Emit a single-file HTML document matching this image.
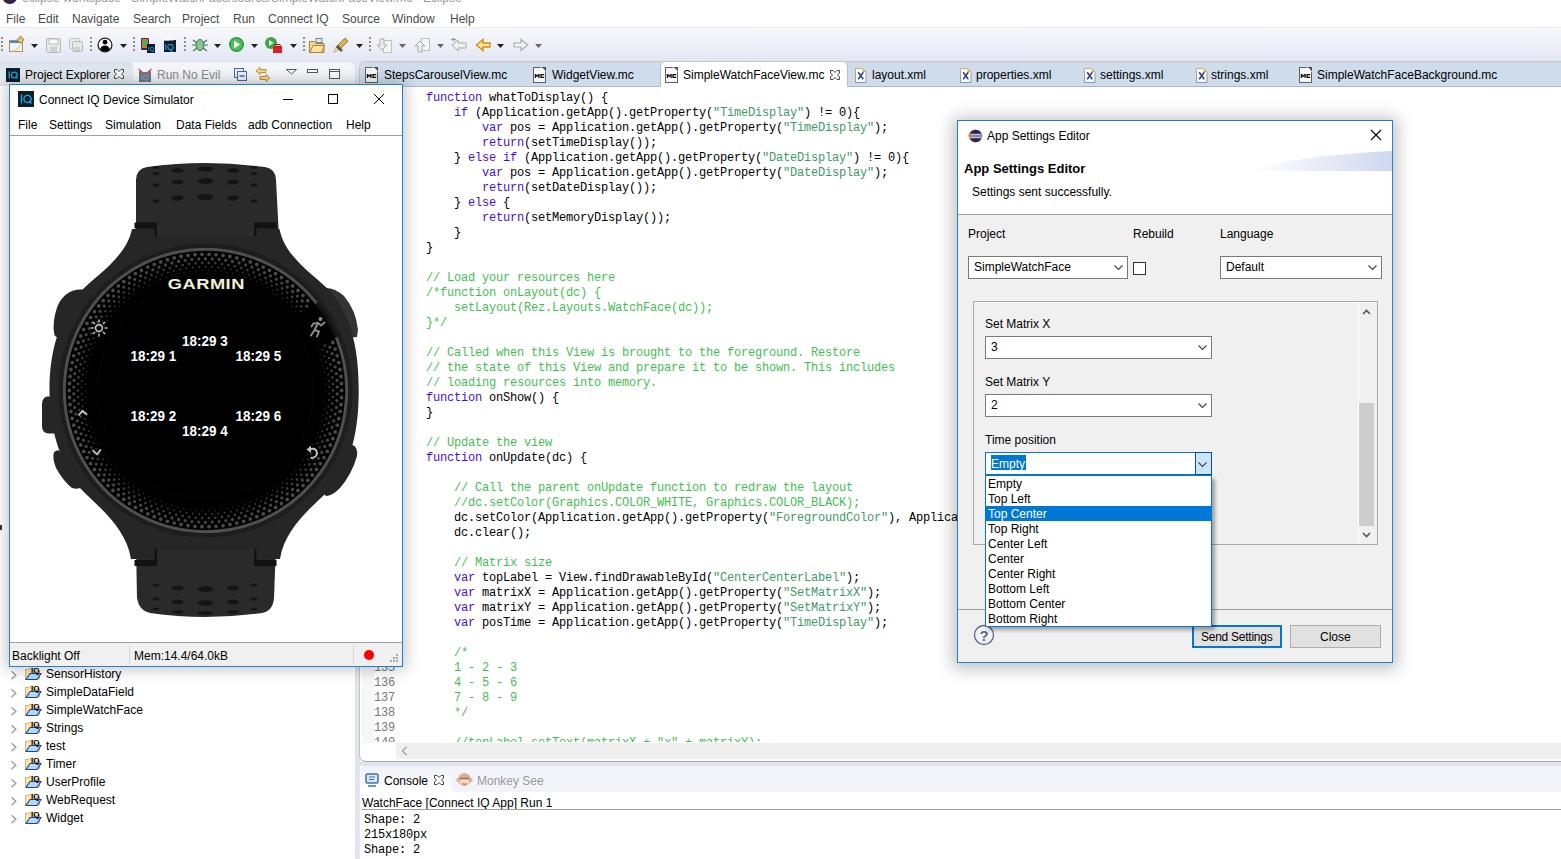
<!DOCTYPE html><html><head><meta charset="utf-8"><style>
*{margin:0;padding:0;box-sizing:border-box}
html,body{width:1561px;height:859px;overflow:hidden;background:#fff}
body{position:relative;font-family:"Liberation Sans",sans-serif;font-size:12px;color:#000}
.a{position:absolute}
.t{position:absolute;white-space:pre;line-height:1;font-family:"Liberation Sans",sans-serif}
.m{position:absolute;white-space:pre;line-height:1;font-family:"Liberation Mono",monospace;font-size:12px;letter-spacing:-0.2px}
svg{position:absolute;overflow:visible}
.k{color:#4a10d8}.c{color:#3fbf4f}.s{color:#3f9a6a}
</style></head><body>
<div class="a" style="left:3px;top:-10px;width:14px;height:14px;border-radius:7px;background:#2c2255;box-shadow:-1px 0 0 #f7941e"></div>
<div class="t" style="left:22px;top:-8px;font-size:12px;color:#999;">eclipse-workspace - SimpleWatchFace/source/SimpleWatchFaceView.mc - Eclipse</div>
<div class="t" style="left:6px;top:13px;font-size:12px;color:#4a4a4a;">File</div>
<div class="t" style="left:38px;top:13px;font-size:12px;color:#4a4a4a;">Edit</div>
<div class="t" style="left:72px;top:13px;font-size:12px;color:#4a4a4a;">Navigate</div>
<div class="t" style="left:133px;top:13px;font-size:12px;color:#4a4a4a;">Search</div>
<div class="t" style="left:182px;top:13px;font-size:12px;color:#4a4a4a;">Project</div>
<div class="t" style="left:233px;top:13px;font-size:12px;color:#4a4a4a;">Run</div>
<div class="t" style="left:268px;top:13px;font-size:12px;color:#4a4a4a;">Connect IQ</div>
<div class="t" style="left:342px;top:13px;font-size:12px;color:#4a4a4a;">Source</div>
<div class="t" style="left:392px;top:13px;font-size:12px;color:#4a4a4a;">Window</div>
<div class="t" style="left:450px;top:13px;font-size:12px;color:#4a4a4a;">Help</div>
<div class="a" style="left:0;top:27px;width:1561px;height:34px;background:linear-gradient(#f8f9fc,#e3e7f4)"></div>
<div class="a" style="left:0;top:27px;width:1561px;height:1px;background:#eceef2"></div>
<div class="a" style="left:0;top:61px;width:1561px;height:25px;background:#e1e5f3"></div>
<svg style="left:0;top:0" width="1561" height="62" viewBox="0 0 1561 62"><rect x="1" y="37" width="2" height="2" fill="#9a9078"/><rect x="1" y="41" width="2" height="2" fill="#9a9078"/><rect x="1" y="45" width="2" height="2" fill="#9a9078"/><rect x="1" y="49" width="2" height="2" fill="#9a9078"/><rect x="9.5" y="40.5" width="13" height="11" fill="#eef6fc" stroke="#a89060"/><rect x="10" y="41" width="12" height="2" fill="#3a88d8"/><path d="M12 51 q7-1 8.5-7" stroke="#f4d890" fill="none" stroke-width="1.5"/><path d="M20.5 36.5 l3.2 3.2 l-3.2 3.2 l-3.2-3.2z" fill="#fff" stroke="#b88a20" stroke-width="1.2"/><path d="M20.5 38v3.4M18.8 39.7h3.4" stroke="#e0b040" stroke-width="0.9"/><path d="M31 44 h7 l-3.5 4z" fill="#222"/><rect x="46.5" y="38.5" width="14" height="14" rx="1.5" fill="#e8e8e8" stroke="#b8b8b8"/><rect x="49" y="39" width="9" height="5" fill="#f8f8f8" stroke="#c0c0c0"/><rect x="50" y="47" width="7" height="5" fill="#d0d0d0"/><rect x="69.5" y="38.5" width="10" height="10" rx="1" fill="#ececec" stroke="#c0c0c0"/><rect x="72.5" y="41.5" width="10" height="10" rx="1" fill="#e8e8e8" stroke="#b8b8b8"/><rect x="74" y="47" width="6" height="4" fill="#d0d0d0"/><rect x="90" y="37" width="2" height="2" fill="#9a9078"/><rect x="90" y="41" width="2" height="2" fill="#9a9078"/><rect x="90" y="45" width="2" height="2" fill="#9a9078"/><rect x="90" y="49" width="2" height="2" fill="#9a9078"/><circle cx="105" cy="45" r="6.9" fill="#fff" stroke="#222" stroke-width="1.3"/><circle cx="105" cy="42.2" r="2.4" fill="#000"/><path d="M100.2 49.6 Q101 45.6 105 45.6 Q109 45.6 109.8 49.6 Q107.8 51.6 105 51.6 Q102.2 51.6 100.2 49.6z" fill="#000"/><path d="M120 44 h7 l-3.5 4z" fill="#222"/><rect x="133" y="37" width="2" height="2" fill="#9a9078"/><rect x="133" y="41" width="2" height="2" fill="#9a9078"/><rect x="133" y="45" width="2" height="2" fill="#9a9078"/><rect x="133" y="49" width="2" height="2" fill="#9a9078"/><rect x="141" y="38" width="8" height="12" rx="1" fill="#334" /><rect x="142" y="39" width="6" height="9" fill="#e86b3a"/><rect x="143" y="40" width="4" height="6" fill="#4caf50"/><rect x="147" y="44" width="8" height="9" fill="#0b1e2d"/><text x="148" y="51" font-size="6" fill="#29b6f6" font-family="Liberation Sans">IQ</text><rect x="164" y="40" width="12" height="12" fill="#0b1e2d"/><text x="164.5" y="50" font-size="9" fill="#29b6f6" font-family="Liberation Sans">IQ</text><text x="163" y="41" font-size="5" fill="#fff" font-weight="bold" font-family="Liberation Sans">SDK</text><rect x="184" y="37" width="2" height="2" fill="#9a9078"/><rect x="184" y="41" width="2" height="2" fill="#9a9078"/><rect x="184" y="45" width="2" height="2" fill="#9a9078"/><rect x="184" y="49" width="2" height="2" fill="#9a9078"/><ellipse cx="200" cy="45" rx="4" ry="5.5" fill="#8fbf8f" stroke="#3a7a5a"/><path d="M193 40l4 3M207 40l-4 3M192 45h4M208 45h-4M193 51l4-3M207 51l-4-3" stroke="#3a7a5a" stroke-width="1.2"/><path d="M214 44 h7 l-3.5 4z" fill="#222"/><circle cx="236.5" cy="44.5" r="7.5" fill="#2e9a3e"/><circle cx="236.5" cy="44.5" r="6" fill="#4cbf5a"/><path d="M234 40.5 v8 l6-4z" fill="#fff"/><path d="M251 44 h7 l-3.5 4z" fill="#222"/><circle cx="271" cy="43" r="6" fill="#3aa84a"/><path d="M269 40 v6 l4.5-3z" fill="#fff"/><rect x="273" y="46" width="9" height="7" fill="#e02020"/><rect x="275" y="44.5" width="5" height="2" fill="none" stroke="#c01010"/><path d="M290 44 h7 l-3.5 4z" fill="#222"/><rect x="303" y="37" width="2" height="2" fill="#9a9078"/><rect x="303" y="41" width="2" height="2" fill="#9a9078"/><rect x="303" y="45" width="2" height="2" fill="#9a9078"/><rect x="303" y="49" width="2" height="2" fill="#9a9078"/><path d="M309.5 41.5 h5 l1.5 2 h8 v9 h-14.5z" fill="#f7d58a" stroke="#b08030"/><rect x="316" y="38.5" width="6" height="4" fill="#dde8f4" stroke="#6a8ab0"/><path d="M310 52.5 l3-7 h11.5 l-3 7z" fill="#fbe3a8" stroke="#b08030"/><path d="M334 52 l3-6 l8-8 l3 3 l-8 8z" fill="#d8b050" stroke="#9a7a40"/><path d="M337 46 l5 5" stroke="#555" stroke-width="2.5"/><path d="M334 52 l2-4 l2 2z" fill="#fff4c0"/><path d="M356 44 h7 l-3.5 4z" fill="#222"/><rect x="369" y="37" width="2" height="2" fill="#9a9078"/><rect x="369" y="41" width="2" height="2" fill="#9a9078"/><rect x="369" y="45" width="2" height="2" fill="#9a9078"/><rect x="369" y="49" width="2" height="2" fill="#9a9078"/><rect x="383.5" y="40.5" width="8" height="12" fill="#f4f4f4" stroke="#c0c0c0"/><path d="M380 39 v6 h-3 l5 5 l5-5 h-3 v-6z" fill="#eee" stroke="#aaa"/><path d="M399 44 h7 l-3.5 4z" fill="#666"/><rect x="421.5" y="38.5" width="8" height="12" fill="#f4f4f4" stroke="#c0c0c0"/><path d="M418 52 v-6 h-3 l5-5 l5 5 h-3 v6z" fill="#eee" stroke="#aaa"/><path d="M437 44 h7 l-3.5 4z" fill="#666"/><path d="M452 45 l6-5 v3 h8 v5 h-8 v3z" fill="#f0f0f0" stroke="#aaa"/><path d="M452 38 l3 3 M455 38 l-3 3 M451 39.5h5" stroke="#888" stroke-width="0.8"/><path d="M476.5 45 l6.5-5.5 v3.5 h7 v4 h-7 v3.5z" fill="#fce7a0" stroke="#d09010" stroke-width="1.4"/><path d="M497 44 h7 l-3.5 4z" fill="#222"/><path d="M527.5 45 l-6.5-5.5 v3.5 h-7 v4 h7 v3.5z" fill="#f4f4f4" stroke="#aaa" stroke-width="1.2"/><path d="M535 44 h7 l-3.5 4z" fill="#666"/></svg>
<div class="a" style="left:0;top:61px;width:355px;height:798px;background:#fff;border-top-right-radius:7px;border-top:1px solid #dfe3ea"></div>
<div class="a" style="left:0;top:62px;width:355px;height:24px;background:linear-gradient(#f3f5fa,#f6f7fa 70%,#e6e8ee);border-top-right-radius:7px"></div>
<div class="a" style="left:0;top:61px;width:133px;height:25px;background:linear-gradient(#d9e2ec,#e9edf2 80%,#e2e4ea);border-top-right-radius:6px;border-top-left-radius:3px"></div>
<div class="a" style="left:355px;top:86px;width:5px;height:773px;background:#dfe3f2"></div>
<div class="a" style="left:359px;top:61px;width:1202px;height:701px;background:#fff;border-left:1px solid #c9c4bc;border-top:1px solid #c9c4bc;border-bottom:1px solid #a8a8a8;border-top-left-radius:7px;border-bottom-left-radius:7px"></div>
<div class="a" style="left:360px;top:62px;width:1201px;height:24px;background:#cfdcec;border-top-left-radius:6px"></div>
<div class="a" style="left:360px;top:86px;width:1201px;height:1px;background:#b2b9c6"></div>
<div class="a" style="left:660px;top:62px;width:188px;height:25px;background:#fff;border-left:1px solid #b8c0cc;border-right:1px solid #b8c0cc;border-top-left-radius:5px;border-top-right-radius:5px"></div>
<svg style="left:365px;top:67px" width="13" height="16" viewBox="0 0 13 16"><rect x="0.5" y="0.5" width="12" height="15" fill="#f7f7f7" stroke="#606060"/><path d="M8.8 0 H13 V4.2z" fill="#505050"/><path d="M7.8 0.2 L12.8 5.2" stroke="#fff" stroke-width="1"/><path d="M1.8 11 V7 H3.2 L4.3 8.4 L5.4 7 H6.7 V11 H5.5 V8.9 L4.3 10.2 L3.1 8.9 V11z" fill="#111"/><path d="M7.4 7 H11.2 V8.3 H8.8 V9.7 H11.2 V11 H7.4z" fill="#111"/></svg>
<div class="t" style="left:384px;top:69px;font-size:12px;color:#000;">StepsCarouselView.mc</div>
<svg style="left:533px;top:67px" width="13" height="16" viewBox="0 0 13 16"><rect x="0.5" y="0.5" width="12" height="15" fill="#f7f7f7" stroke="#606060"/><path d="M8.8 0 H13 V4.2z" fill="#505050"/><path d="M7.8 0.2 L12.8 5.2" stroke="#fff" stroke-width="1"/><path d="M1.8 11 V7 H3.2 L4.3 8.4 L5.4 7 H6.7 V11 H5.5 V8.9 L4.3 10.2 L3.1 8.9 V11z" fill="#111"/><path d="M7.4 7 H11.2 V8.3 H8.8 V9.7 H11.2 V11 H7.4z" fill="#111"/></svg>
<div class="t" style="left:552px;top:69px;font-size:12px;color:#000;">WidgetView.mc</div>
<svg style="left:665px;top:67px" width="13" height="16" viewBox="0 0 13 16"><rect x="0.5" y="0.5" width="12" height="15" fill="#f7f7f7" stroke="#606060"/><path d="M8.8 0 H13 V4.2z" fill="#505050"/><path d="M7.8 0.2 L12.8 5.2" stroke="#fff" stroke-width="1"/><path d="M1.8 11 V7 H3.2 L4.3 8.4 L5.4 7 H6.7 V11 H5.5 V8.9 L4.3 10.2 L3.1 8.9 V11z" fill="#111"/><path d="M7.4 7 H11.2 V8.3 H8.8 V9.7 H11.2 V11 H7.4z" fill="#111"/></svg>
<div class="t" style="left:683px;top:69px;font-size:12px;color:#000;">SimpleWatchFaceView.mc</div>
<svg style="left:830px;top:70px" width="11" height="11" viewBox="0 0 11 11"><path d="M0.5 0.5 H3 L5 2.5 L7 0.5 H9.5 V3 L7.5 5 L9.5 7 V9.5 H7 L5 7.5 L3 9.5 H0.5 V7 L2.5 5 L0.5 3 Z" fill="#fff" stroke="#444" stroke-width="1"/></svg>
<svg style="left:855px;top:68px" width="12" height="15" viewBox="0 0 12 15"><defs><linearGradient id="xg" x1="0" y1="0" x2="0" y2="1"><stop offset="0" stop-color="#c8b078"/><stop offset="1" stop-color="#8a94aa"/></linearGradient></defs><path d="M0.5 0.5 h7 l3.5 3.5 v10.5 h-10.5z" fill="#f8f9fc" stroke="url(#xg)"/><path d="M7.5 0.5 l3.5 3.5 h-3.5z" fill="#e0b050"/><path d="M3.2 4.3 L8.3 11.2 M8.3 4.3 L3.2 11.2" stroke="#2a4674" stroke-width="1.5"/></svg>
<div class="t" style="left:872px;top:69px;font-size:12px;color:#000;">layout.xml</div>
<svg style="left:960px;top:68px" width="12" height="15" viewBox="0 0 12 15"><defs><linearGradient id="xg" x1="0" y1="0" x2="0" y2="1"><stop offset="0" stop-color="#c8b078"/><stop offset="1" stop-color="#8a94aa"/></linearGradient></defs><path d="M0.5 0.5 h7 l3.5 3.5 v10.5 h-10.5z" fill="#f8f9fc" stroke="url(#xg)"/><path d="M7.5 0.5 l3.5 3.5 h-3.5z" fill="#e0b050"/><path d="M3.2 4.3 L8.3 11.2 M8.3 4.3 L3.2 11.2" stroke="#2a4674" stroke-width="1.5"/></svg>
<div class="t" style="left:976px;top:69px;font-size:12px;color:#000;">properties.xml</div>
<svg style="left:1084px;top:68px" width="12" height="15" viewBox="0 0 12 15"><defs><linearGradient id="xg" x1="0" y1="0" x2="0" y2="1"><stop offset="0" stop-color="#c8b078"/><stop offset="1" stop-color="#8a94aa"/></linearGradient></defs><path d="M0.5 0.5 h7 l3.5 3.5 v10.5 h-10.5z" fill="#f8f9fc" stroke="url(#xg)"/><path d="M7.5 0.5 l3.5 3.5 h-3.5z" fill="#e0b050"/><path d="M3.2 4.3 L8.3 11.2 M8.3 4.3 L3.2 11.2" stroke="#2a4674" stroke-width="1.5"/></svg>
<div class="t" style="left:1100px;top:69px;font-size:12px;color:#000;">settings.xml</div>
<svg style="left:1196px;top:68px" width="12" height="15" viewBox="0 0 12 15"><defs><linearGradient id="xg" x1="0" y1="0" x2="0" y2="1"><stop offset="0" stop-color="#c8b078"/><stop offset="1" stop-color="#8a94aa"/></linearGradient></defs><path d="M0.5 0.5 h7 l3.5 3.5 v10.5 h-10.5z" fill="#f8f9fc" stroke="url(#xg)"/><path d="M7.5 0.5 l3.5 3.5 h-3.5z" fill="#e0b050"/><path d="M3.2 4.3 L8.3 11.2 M8.3 4.3 L3.2 11.2" stroke="#2a4674" stroke-width="1.5"/></svg>
<div class="t" style="left:1211px;top:69px;font-size:12px;color:#000;">strings.xml</div>
<svg style="left:1299px;top:67px" width="13" height="16" viewBox="0 0 13 16"><rect x="0.5" y="0.5" width="12" height="15" fill="#f7f7f7" stroke="#606060"/><path d="M8.8 0 H13 V4.2z" fill="#505050"/><path d="M7.8 0.2 L12.8 5.2" stroke="#fff" stroke-width="1"/><path d="M1.8 11 V7 H3.2 L4.3 8.4 L5.4 7 H6.7 V11 H5.5 V8.9 L4.3 10.2 L3.1 8.9 V11z" fill="#111"/><path d="M7.4 7 H11.2 V8.3 H8.8 V9.7 H11.2 V11 H7.4z" fill="#111"/></svg>
<div class="t" style="left:1317px;top:69px;font-size:12px;color:#000;">SimpleWatchFaceBackground.mc</div>
<div class="a" style="left:362px;top:87px;width:12px;height:656px;background:#f7f7f7"></div>
<div class="a" style="left:360px;top:87px;width:1201px;height:655px;overflow:hidden">
<div class="m" style="left:38px;top:5px">    <span class="k">function</span> whatToDisplay() {</div>
<div class="m" style="left:14px;top:5px;color:#787878">97</div>
<div class="m" style="left:38px;top:20px">        <span class="k">if</span> (Application.getApp().getProperty(<span class="s">&quot;TimeDisplay&quot;</span>) != 0){</div>
<div class="m" style="left:14px;top:20px;color:#787878">98</div>
<div class="m" style="left:38px;top:35px">            <span class="k">var</span> pos = Application.getApp().getProperty(<span class="s">&quot;TimeDisplay&quot;</span>);</div>
<div class="m" style="left:14px;top:35px;color:#787878">99</div>
<div class="m" style="left:38px;top:50px">            <span class="k">return</span>(setTimeDisplay());</div>
<div class="m" style="left:14px;top:50px;color:#787878">100</div>
<div class="m" style="left:38px;top:65px">        } <span class="k">else if</span> (Application.getApp().getProperty(<span class="s">&quot;DateDisplay&quot;</span>) != 0){</div>
<div class="m" style="left:14px;top:65px;color:#787878">101</div>
<div class="m" style="left:38px;top:80px">            <span class="k">var</span> pos = Application.getApp().getProperty(<span class="s">&quot;DateDisplay&quot;</span>);</div>
<div class="m" style="left:14px;top:80px;color:#787878">102</div>
<div class="m" style="left:38px;top:95px">            <span class="k">return</span>(setDateDisplay());</div>
<div class="m" style="left:14px;top:95px;color:#787878">103</div>
<div class="m" style="left:38px;top:110px">        } <span class="k">else</span> {</div>
<div class="m" style="left:14px;top:110px;color:#787878">104</div>
<div class="m" style="left:38px;top:125px">            <span class="k">return</span>(setMemoryDisplay());</div>
<div class="m" style="left:14px;top:125px;color:#787878">105</div>
<div class="m" style="left:38px;top:140px">        }</div>
<div class="m" style="left:14px;top:140px;color:#787878">106</div>
<div class="m" style="left:38px;top:155px">    }</div>
<div class="m" style="left:14px;top:155px;color:#787878">107</div>
<div class="m" style="left:38px;top:170px"></div>
<div class="m" style="left:14px;top:170px;color:#787878">108</div>
<div class="m" style="left:38px;top:185px">    <span class="c">// Load your resources here</span></div>
<div class="m" style="left:14px;top:185px;color:#787878">109</div>
<div class="m" style="left:38px;top:200px">    <span class="c">/*function onLayout(dc) {</span></div>
<div class="m" style="left:14px;top:200px;color:#787878">110</div>
<div class="m" style="left:38px;top:215px">        <span class="c">setLayout(Rez.Layouts.WatchFace(dc));</span></div>
<div class="m" style="left:14px;top:215px;color:#787878">111</div>
<div class="m" style="left:38px;top:230px">    <span class="c">}*/</span></div>
<div class="m" style="left:14px;top:230px;color:#787878">112</div>
<div class="m" style="left:38px;top:245px"></div>
<div class="m" style="left:14px;top:245px;color:#787878">113</div>
<div class="m" style="left:38px;top:260px">    <span class="c">// Called when this View is brought to the foreground. Restore</span></div>
<div class="m" style="left:14px;top:260px;color:#787878">114</div>
<div class="m" style="left:38px;top:275px">    <span class="c">// the state of this View and prepare it to be shown. This includes</span></div>
<div class="m" style="left:14px;top:275px;color:#787878">115</div>
<div class="m" style="left:38px;top:290px">    <span class="c">// loading resources into memory.</span></div>
<div class="m" style="left:14px;top:290px;color:#787878">116</div>
<div class="m" style="left:38px;top:305px">    <span class="k">function</span> onShow() {</div>
<div class="m" style="left:14px;top:305px;color:#787878">117</div>
<div class="m" style="left:38px;top:320px">    }</div>
<div class="m" style="left:14px;top:320px;color:#787878">118</div>
<div class="m" style="left:38px;top:335px"></div>
<div class="m" style="left:14px;top:335px;color:#787878">119</div>
<div class="m" style="left:38px;top:350px">    <span class="c">// Update the view</span></div>
<div class="m" style="left:14px;top:350px;color:#787878">120</div>
<div class="m" style="left:38px;top:365px">    <span class="k">function</span> onUpdate(dc) {</div>
<div class="m" style="left:14px;top:365px;color:#787878">121</div>
<div class="m" style="left:38px;top:380px"></div>
<div class="m" style="left:14px;top:380px;color:#787878">122</div>
<div class="m" style="left:38px;top:395px">        <span class="c">// Call the parent onUpdate function to redraw the layout</span></div>
<div class="m" style="left:14px;top:395px;color:#787878">123</div>
<div class="m" style="left:38px;top:410px">        <span class="c">//dc.setColor(Graphics.COLOR_WHITE, Graphics.COLOR_BLACK);</span></div>
<div class="m" style="left:14px;top:410px;color:#787878">124</div>
<div class="m" style="left:38px;top:425px">        dc.setColor(Application.getApp().getProperty(<span class="s">&quot;ForegroundColor&quot;</span>), Application.getApp().getProperty(<span class="s">&quot;BackgroundColor&quot;</span>));</div>
<div class="m" style="left:14px;top:425px;color:#787878">125</div>
<div class="m" style="left:38px;top:440px">        dc.clear();</div>
<div class="m" style="left:14px;top:440px;color:#787878">126</div>
<div class="m" style="left:38px;top:455px"></div>
<div class="m" style="left:14px;top:455px;color:#787878">127</div>
<div class="m" style="left:38px;top:470px">        <span class="c">// Matrix size</span></div>
<div class="m" style="left:14px;top:470px;color:#787878">128</div>
<div class="m" style="left:38px;top:485px">        <span class="k">var</span> topLabel = View.findDrawableById(<span class="s">&quot;CenterCenterLabel&quot;</span>);</div>
<div class="m" style="left:14px;top:485px;color:#787878">129</div>
<div class="m" style="left:38px;top:500px">        <span class="k">var</span> matrixX = Application.getApp().getProperty(<span class="s">&quot;SetMatrixX&quot;</span>);</div>
<div class="m" style="left:14px;top:500px;color:#787878">130</div>
<div class="m" style="left:38px;top:515px">        <span class="k">var</span> matrixY = Application.getApp().getProperty(<span class="s">&quot;SetMatrixY&quot;</span>);</div>
<div class="m" style="left:14px;top:515px;color:#787878">131</div>
<div class="m" style="left:38px;top:530px">        <span class="k">var</span> posTime = Application.getApp().getProperty(<span class="s">&quot;TimeDisplay&quot;</span>);</div>
<div class="m" style="left:14px;top:530px;color:#787878">132</div>
<div class="m" style="left:38px;top:545px"></div>
<div class="m" style="left:14px;top:545px;color:#787878">133</div>
<div class="m" style="left:38px;top:560px">        <span class="c">/*</span></div>
<div class="m" style="left:14px;top:560px;color:#787878">134</div>
<div class="m" style="left:38px;top:575px">        <span class="c">1 - 2 - 3</span></div>
<div class="m" style="left:14px;top:575px;color:#787878">135</div>
<div class="m" style="left:38px;top:590px">        <span class="c">4 - 5 - 6</span></div>
<div class="m" style="left:14px;top:590px;color:#787878">136</div>
<div class="m" style="left:38px;top:605px">        <span class="c">7 - 8 - 9</span></div>
<div class="m" style="left:14px;top:605px;color:#787878">137</div>
<div class="m" style="left:38px;top:620px">        <span class="c">*/</span></div>
<div class="m" style="left:14px;top:620px;color:#787878">138</div>
<div class="m" style="left:38px;top:635px"></div>
<div class="m" style="left:14px;top:635px;color:#787878">139</div>
<div class="m" style="left:38px;top:650px">        <span class="c">//topLabel.setText(matrixX + &quot;x&quot; + matrixY);</span></div>
<div class="m" style="left:14px;top:650px;color:#787878">140</div>
</div>
<div class="a" style="left:396px;top:743px;width:1165px;height:16px;background:#efefef"></div>
<svg style="left:400px;top:745px" width="10" height="12" viewBox="0 0 10 12"><path d="M6.5 2 l-4 4 l4 4" stroke="#a0a0a0" stroke-width="1.3" fill="none"/></svg>
<div class="a" style="left:360px;top:762px;width:1201px;height:4px;background:#dfe3f2"></div>
<div class="a" style="left:359px;top:766px;width:1202px;height:93px;background:#fff;border-left:1px solid #e8e8ee;border-top-left-radius:7px"></div>
<div class="a" style="left:360px;top:766px;width:1201px;height:26px;background:#f3f4fa;border-top-left-radius:6px"></div>
<div class="a" style="left:360px;top:766px;width:92px;height:26px;background:linear-gradient(#eef1f6,#fff);border-top-right-radius:7px;border-top-left-radius:6px"></div>
<svg style="left:365px;top:773px" width="14" height="14" viewBox="0 0 14 14"><rect x="1" y="1" width="12" height="9" rx="1.5" fill="#dfe8f6" stroke="#3f6fb0" stroke-width="1.5"/><path d="M4 4h6M4 6.5h5" stroke="#3f6fb0"/><path d="M3 13h8" stroke="#3f6fb0" stroke-width="1.5"/></svg>
<div class="t" style="left:384px;top:775px;font-size:12px;color:#000;">Console</div>
<svg style="left:434px;top:775px" width="11" height="11" viewBox="0 0 11 11"><path d="M0.5 0.5 H3 L5 2.5 L7 0.5 H9.5 V3 L7.5 5 L9.5 7 V9.5 H7 L5 7.5 L3 9.5 H0.5 V7 L2.5 5 L0.5 3 Z" fill="#fff" stroke="#444" stroke-width="1"/></svg>
<svg style="left:456px;top:771px" width="17" height="17" viewBox="0 0 17 17"><circle cx="2.5" cy="9" r="2.3" fill="#e0b8a0"/><circle cx="14.5" cy="9" r="2.3" fill="#e0b8a0"/><circle cx="8.5" cy="8.5" r="6.5" fill="#d9ae92"/><ellipse cx="8.5" cy="10.5" rx="4.5" ry="4" fill="#f3d9c6"/><path d="M4 7.5h9" stroke="#a07058" stroke-width="1.6"/><path d="M6.5 12.5q2 1.5 4 0" stroke="#c06060" stroke-width="1.2" fill="none"/></svg>
<div class="t" style="left:477px;top:775px;font-size:12px;color:#999;">Monkey See</div>
<div class="t" style="left:362px;top:797px;font-size:12px;color:#000;">WatchFace [Connect IQ App] Run 1</div>
<div class="a" style="left:362px;top:809px;width:1199px;height:1px;background:#a0a0a0"></div>
<div class="m" style="left:364px;top:814px">Shape: 2</div>
<div class="m" style="left:364px;top:829px">215x180px</div>
<div class="m" style="left:364px;top:844px">Shape: 2</div>
<svg style="left:6px;top:68px" width="14" height="14" viewBox="0 0 14 14"><rect width="14" height="14" fill="#0d1e2c"/><path d="M3.2 3.5v7" stroke="#22a8d8" stroke-width="1.3"/><circle cx="8.3" cy="7" r="2.9" stroke="#22a8d8" stroke-width="1.3" fill="none"/><path d="M9.5 8.5l2 2" stroke="#22a8d8" stroke-width="1.3"/></svg>
<div class="t" style="left:25px;top:69px;font-size:12px;color:#000;">Project Explorer</div>
<svg style="left:114px;top:69px" width="11" height="11" viewBox="0 0 11 11"><path d="M0.5 0.5 H3 L5 2.5 L7 0.5 H9.5 V3 L7.5 5 L9.5 7 V9.5 H7 L5 7.5 L3 9.5 H0.5 V7 L2.5 5 L0.5 3 Z" fill="#fff" stroke="#444" stroke-width="1"/></svg>
<svg style="left:137px;top:67px" width="16" height="16" viewBox="0 0 16 16"><rect x="2" y="5" width="12" height="10" fill="#6a7a88"/><path d="M1 1 l2 5 l3-1z M15 1 l-2 5 l-3-1z" fill="#d04848"/><text x="4" y="13" font-size="7" fill="#aac" font-family="Liberation Sans">IQ</text></svg>
<div class="t" style="left:157px;top:69px;font-size:12px;color:#8a8a8a;">Run No Evil</div>
<svg style="left:233px;top:67px" width="120" height="16" viewBox="233 67 120 16"><rect x="234.5" y="68.5" width="9" height="9" fill="#eef2f8" stroke="#4a6a9a"/><rect x="237.5" y="71.5" width="9" height="9" fill="#eef2f8" stroke="#4a6a9a"/><path d="M239.5 76h5" stroke="#2050a0" stroke-width="1.3"/><path d="M256 71 l4-3.5 v2 h6 v3 h-6 v2z M270 78 l-4 3.5 v-2 h-6 v-3 h6 v-2z" fill="#f5d890" stroke="#c08a20" stroke-width="0.9"/><path d="M286.5 69.5 h10 l-5 4.5z" fill="#fff" stroke="#555"/><rect x="307.5" y="69.5" width="10" height="3" fill="#fff" stroke="#555"/><rect x="329.5" y="69.5" width="10" height="9" fill="#fff" stroke="#555"/><path d="M330 71.5h9" stroke="#555"/></svg>
<svg style="left:8px;top:665px" width="36" height="18" viewBox="0 0 36 18"><path d="M3.5 6.3 L7.8 10.3 L3.5 14.3" stroke="#a0a0a0" stroke-width="1.5" fill="none"/><path d="M17.5 14 V4.5 h3 l1-1.2 h5 v2.7 h5 v8z" fill="#fbe6a6" stroke="#c8a060" stroke-width="0.8"/><path d="M18 14.5 l4-6 h11 l-4 6z" fill="#a8dcf6" stroke="#2a3aa8" stroke-width="1.1"/><text x="23" y="8" font-size="8" font-weight="bold" fill="#000" font-family="Liberation Sans">IQ</text></svg>
<div class="t" style="left:46px;top:668px;font-size:12px;color:#000;">SensorHistory</div>
<svg style="left:8px;top:683px" width="36" height="18" viewBox="0 0 36 18"><path d="M3.5 6.3 L7.8 10.3 L3.5 14.3" stroke="#a0a0a0" stroke-width="1.5" fill="none"/><path d="M17.5 14 V4.5 h3 l1-1.2 h5 v2.7 h5 v8z" fill="#fbe6a6" stroke="#c8a060" stroke-width="0.8"/><path d="M18 14.5 l4-6 h11 l-4 6z" fill="#a8dcf6" stroke="#2a3aa8" stroke-width="1.1"/><text x="23" y="8" font-size="8" font-weight="bold" fill="#000" font-family="Liberation Sans">IQ</text></svg>
<div class="t" style="left:46px;top:686px;font-size:12px;color:#000;">SimpleDataField</div>
<svg style="left:8px;top:701px" width="36" height="18" viewBox="0 0 36 18"><path d="M3.5 6.3 L7.8 10.3 L3.5 14.3" stroke="#a0a0a0" stroke-width="1.5" fill="none"/><path d="M17.5 14 V4.5 h3 l1-1.2 h5 v2.7 h5 v8z" fill="#fbe6a6" stroke="#c8a060" stroke-width="0.8"/><path d="M18 14.5 l4-6 h11 l-4 6z" fill="#a8dcf6" stroke="#2a3aa8" stroke-width="1.1"/><text x="23" y="8" font-size="8" font-weight="bold" fill="#000" font-family="Liberation Sans">IQ</text></svg>
<div class="t" style="left:46px;top:704px;font-size:12px;color:#000;">SimpleWatchFace</div>
<svg style="left:8px;top:719px" width="36" height="18" viewBox="0 0 36 18"><path d="M3.5 6.3 L7.8 10.3 L3.5 14.3" stroke="#a0a0a0" stroke-width="1.5" fill="none"/><path d="M17.5 14 V4.5 h3 l1-1.2 h5 v2.7 h5 v8z" fill="#fbe6a6" stroke="#c8a060" stroke-width="0.8"/><path d="M18 14.5 l4-6 h11 l-4 6z" fill="#a8dcf6" stroke="#2a3aa8" stroke-width="1.1"/><text x="23" y="8" font-size="8" font-weight="bold" fill="#000" font-family="Liberation Sans">IQ</text></svg>
<div class="t" style="left:46px;top:722px;font-size:12px;color:#000;">Strings</div>
<svg style="left:8px;top:737px" width="36" height="18" viewBox="0 0 36 18"><path d="M3.5 6.3 L7.8 10.3 L3.5 14.3" stroke="#a0a0a0" stroke-width="1.5" fill="none"/><path d="M17.5 14 V4.5 h3 l1-1.2 h5 v2.7 h5 v8z" fill="#fbe6a6" stroke="#c8a060" stroke-width="0.8"/><path d="M18 14.5 l4-6 h11 l-4 6z" fill="#a8dcf6" stroke="#2a3aa8" stroke-width="1.1"/><text x="23" y="8" font-size="8" font-weight="bold" fill="#000" font-family="Liberation Sans">IQ</text></svg>
<div class="t" style="left:46px;top:740px;font-size:12px;color:#000;">test</div>
<svg style="left:8px;top:755px" width="36" height="18" viewBox="0 0 36 18"><path d="M3.5 6.3 L7.8 10.3 L3.5 14.3" stroke="#a0a0a0" stroke-width="1.5" fill="none"/><path d="M17.5 14 V4.5 h3 l1-1.2 h5 v2.7 h5 v8z" fill="#fbe6a6" stroke="#c8a060" stroke-width="0.8"/><path d="M18 14.5 l4-6 h11 l-4 6z" fill="#a8dcf6" stroke="#2a3aa8" stroke-width="1.1"/><text x="23" y="8" font-size="8" font-weight="bold" fill="#000" font-family="Liberation Sans">IQ</text></svg>
<div class="t" style="left:46px;top:758px;font-size:12px;color:#000;">Timer</div>
<svg style="left:8px;top:773px" width="36" height="18" viewBox="0 0 36 18"><path d="M3.5 6.3 L7.8 10.3 L3.5 14.3" stroke="#a0a0a0" stroke-width="1.5" fill="none"/><path d="M17.5 14 V4.5 h3 l1-1.2 h5 v2.7 h5 v8z" fill="#fbe6a6" stroke="#c8a060" stroke-width="0.8"/><path d="M18 14.5 l4-6 h11 l-4 6z" fill="#a8dcf6" stroke="#2a3aa8" stroke-width="1.1"/><text x="23" y="8" font-size="8" font-weight="bold" fill="#000" font-family="Liberation Sans">IQ</text></svg>
<div class="t" style="left:46px;top:776px;font-size:12px;color:#000;">UserProfile</div>
<svg style="left:8px;top:791px" width="36" height="18" viewBox="0 0 36 18"><path d="M3.5 6.3 L7.8 10.3 L3.5 14.3" stroke="#a0a0a0" stroke-width="1.5" fill="none"/><path d="M17.5 14 V4.5 h3 l1-1.2 h5 v2.7 h5 v8z" fill="#fbe6a6" stroke="#c8a060" stroke-width="0.8"/><path d="M18 14.5 l4-6 h11 l-4 6z" fill="#a8dcf6" stroke="#2a3aa8" stroke-width="1.1"/><text x="23" y="8" font-size="8" font-weight="bold" fill="#000" font-family="Liberation Sans">IQ</text></svg>
<div class="t" style="left:46px;top:794px;font-size:12px;color:#000;">WebRequest</div>
<svg style="left:8px;top:809px" width="36" height="18" viewBox="0 0 36 18"><path d="M3.5 6.3 L7.8 10.3 L3.5 14.3" stroke="#a0a0a0" stroke-width="1.5" fill="none"/><path d="M17.5 14 V4.5 h3 l1-1.2 h5 v2.7 h5 v8z" fill="#fbe6a6" stroke="#c8a060" stroke-width="0.8"/><path d="M18 14.5 l4-6 h11 l-4 6z" fill="#a8dcf6" stroke="#2a3aa8" stroke-width="1.1"/><text x="23" y="8" font-size="8" font-weight="bold" fill="#000" font-family="Liberation Sans">IQ</text></svg>
<div class="t" style="left:46px;top:812px;font-size:12px;color:#000;">Widget</div>
<div class="a" style="left:0;top:525px;width:2px;height:5px;border:1px solid #333"></div>
<div class="a" style="left:9px;top:84px;width:394px;height:583px;box-shadow:0 0 14px 3px rgba(0,0,0,0.22)"></div><div class="a" style="left:9px;top:84px;width:394px;height:583px;background:#fff;border:1px solid #1883d7"></div><svg style="left:18px;top:91px" width="16" height="16" viewBox="0 0 16 16"><rect width="16" height="16" fill="#0d1e2c"/><path d="M3.5 3.5v9" stroke="#22a8d8" stroke-width="1.4"/><circle cx="9.5" cy="8" r="3.6" stroke="#22a8d8" stroke-width="1.4" fill="none"/><path d="M11 10l2.5 2.5" stroke="#22a8d8" stroke-width="1.4"/></svg><div class="t" style="left:39px;top:94px;font-size:12px;color:#000;">Connect IQ Device Simulator</div><svg style="left:270px;top:88px" width="130" height="24" viewBox="270 88 130 24"><path d="M283 99.5h10" stroke="#000"/><rect x="328.5" y="94.5" width="9" height="9" fill="none" stroke="#000"/><path d="M374 94l10 10M384 94l-10 10" stroke="#000" stroke-width="1"/></svg><div class="t" style="left:18px;top:119px;font-size:12px;color:#000;">File</div><div class="t" style="left:49px;top:119px;font-size:12px;color:#000;">Settings</div><div class="t" style="left:105px;top:119px;font-size:12px;color:#000;">Simulation</div><div class="t" style="left:176px;top:119px;font-size:12px;color:#000;">Data Fields</div><div class="t" style="left:248px;top:119px;font-size:12px;color:#000;">adb Connection</div><div class="t" style="left:346px;top:119px;font-size:12px;color:#000;">Help</div><div class="a" style="left:10px;top:135px;width:392px;height:1px;background:#a0a0a0"></div><div class="a" style="left:10px;top:642px;width:392px;height:1px;background:#a0a0a0"></div><div class="a" style="left:10px;top:643px;width:392px;height:23px;background:#f0f0f0"></div><div class="a" style="left:129px;top:645px;width:1px;height:19px;background:#d8d8d8"></div><div class="a" style="left:353px;top:645px;width:1px;height:19px;background:#d8d8d8"></div><div class="t" style="left:12px;top:650px;font-size:12px;color:#000;">Backlight Off</div><div class="t" style="left:134px;top:650px;font-size:12px;color:#000;">Mem:14.4/64.0kB</div><div class="a" style="left:364px;top:650px;width:10px;height:10px;border-radius:5px;background:#f00"></div><svg style="left:390px;top:654px" width="10" height="10" viewBox="0 0 10 10"><rect x="6" y="0" width="2" height="2" fill="#aaa"/><rect x="3" y="3" width="2" height="2" fill="#aaa"/><rect x="6" y="3" width="2" height="2" fill="#aaa"/><rect x="0" y="6" width="2" height="2" fill="#aaa"/><rect x="3" y="6" width="2" height="2" fill="#aaa"/><rect x="6" y="6" width="2" height="2" fill="#aaa"/></svg><svg style="left:11px;top:136px" width="390" height="506" viewBox="11 136 390 506"><path d="M136 237 L136 180 Q136 169 147 167 Q205 159 265 167 Q276 169 276 180 L279 237z" fill="#2a2a2a"/><path d="M136 545 L137 598 Q139 611 150 613 Q205 621 262 613 Q273 611 274 598 L276 545z" fill="#2a2a2a"/><ellipse cx="156" cy="167.5" rx="3.5" ry="1.2" fill="#141414"/><ellipse cx="254" cy="167.5" rx="3.5" ry="1.2" fill="#141414"/><ellipse cx="156" cy="173.5" rx="3.5" ry="1.5" fill="#141414"/><ellipse cx="177.5" cy="170.5" rx="6" ry="2.2" fill="#141414"/><ellipse cx="205.5" cy="169" rx="8" ry="2.6" fill="#141414"/><ellipse cx="233" cy="170.5" rx="6" ry="2.2" fill="#141414"/><ellipse cx="254" cy="173.5" rx="3.5" ry="1.5" fill="#141414"/><ellipse cx="156" cy="185" rx="3.5" ry="1.8" fill="#141414"/><ellipse cx="177.5" cy="182" rx="6" ry="2.5" fill="#141414"/><ellipse cx="205.5" cy="181" rx="8" ry="2.9" fill="#141414"/><ellipse cx="233" cy="182" rx="6" ry="2.5" fill="#141414"/><ellipse cx="254" cy="185" rx="3.5" ry="1.8" fill="#141414"/><ellipse cx="156" cy="201" rx="3.5" ry="1.8" fill="#141414"/><ellipse cx="177.5" cy="198" rx="6" ry="2.8" fill="#141414"/><ellipse cx="205.5" cy="197" rx="8" ry="3.1" fill="#141414"/><ellipse cx="233" cy="198" rx="6" ry="2.8" fill="#141414"/><ellipse cx="254" cy="201" rx="3.5" ry="1.8" fill="#141414"/><ellipse cx="156" cy="585" rx="3.5" ry="1.6" fill="#151515"/><ellipse cx="177.5" cy="588" rx="6" ry="2.6" fill="#151515"/><ellipse cx="205.5" cy="589" rx="8" ry="3.0" fill="#151515"/><ellipse cx="233" cy="588" rx="6" ry="2.6" fill="#151515"/><ellipse cx="254" cy="585" rx="3.5" ry="1.6" fill="#151515"/><ellipse cx="156" cy="599" rx="3.5" ry="1.6" fill="#151515"/><ellipse cx="177.5" cy="602" rx="6" ry="2.6" fill="#151515"/><ellipse cx="205.5" cy="603" rx="8" ry="2.8" fill="#151515"/><ellipse cx="233" cy="602" rx="6" ry="2.6" fill="#151515"/><ellipse cx="254" cy="599" rx="3.5" ry="1.6" fill="#151515"/><ellipse cx="156" cy="609" rx="3.5" ry="1.3" fill="#151515"/><ellipse cx="177.5" cy="612" rx="6" ry="1.8" fill="#151515"/><ellipse cx="205.5" cy="613" rx="8" ry="2.0" fill="#151515"/><ellipse cx="233" cy="612" rx="6" ry="1.8" fill="#151515"/><ellipse cx="254" cy="609" rx="3.5" ry="1.3" fill="#151515"/><path d="M84 290 C74 288 63 294 58 305 C54 315 52.5 327 54.5 335 C56 338 62 339 68 338 L92 300z" fill="#262626"/><path d="M47 396.5 Q42 398 42 404 L42 426 Q42 433 48 433.5 L56 433.5 L56 396.5z" fill="#262626"/><path d="M54 452 Q52 458 56 468 Q64 482 72 488 Q78 490 82 487 L70 460 L58 450z" fill="#262626"/><path d="M324 288 Q334 287 344 296 Q356 310 358 330 L357 337 L346 338 L318 296z" fill="#343434"/><path d="M352 445 Q358 446 357 456 Q352 474 340 488 Q332 496 326 496 L318 488 L346 450z" fill="#262626"/><path d="M132 229 L279.5 229 C285 258 316 276 331 292 C352 318 358.7 350 358.7 390 C358.7 430 352 462 331 488 C316 504 285 526 280 559 L131 559 C126 526 95 504 80 488 C60 462 49.5 430 49.5 390 C49.5 350 60 318 80 292 C95 276 126 258 132 229z" fill="#262626"/><rect x="157" y="228" width="97" height="8.5" fill="#2a2a2a"/><rect x="157" y="549" width="97" height="10.5" fill="#2a2a2a"/><path d="M134.5 222.5 h22.5 v14 h-2.5 v-8 h-20z" fill="#121212"/><path d="M276.5 222.5 h-22.5 v14 h2.5 v-8 h20z" fill="#121212"/><path d="M134.5 566 h22.5 v-17 h-2.5 v11 h-20z" fill="#121212"/><path d="M276.5 566 h-22.5 v-17 h2.5 v11 h20z" fill="#121212"/><circle cx="205.5" cy="390.5" r="147" fill="#1d1d1d"/><circle cx="205.5" cy="390.5" r="143" fill="#111"/><circle cx="205.5" cy="390.5" r="139.5" fill="#000"/><path d="M336.78 338.52 A141.2 141.2 0 1 1 315.70 302.22" stroke="#4f4f4f" stroke-width="3" fill="none" stroke-linecap="round"/><path fill="#4a4a4a" d="M339.8 390.5a1.9 1.9 0 1 0 3.8 0a1.9 1.9 0 1 0 -3.8 0M339.6 397.5a1.9 1.9 0 1 0 3.8 0a1.9 1.9 0 1 0 -3.8 0M339.1 404.5a1.9 1.9 0 1 0 3.8 0a1.9 1.9 0 1 0 -3.8 0M338.2 411.5a1.9 1.9 0 1 0 3.8 0a1.9 1.9 0 1 0 -3.8 0M336.9 418.4a1.9 1.9 0 1 0 3.8 0a1.9 1.9 0 1 0 -3.8 0M335.3 425.2a1.9 1.9 0 1 0 3.8 0a1.9 1.9 0 1 0 -3.8 0M333.3 431.9a1.9 1.9 0 1 0 3.8 0a1.9 1.9 0 1 0 -3.8 0M331.0 438.5a1.9 1.9 0 1 0 3.8 0a1.9 1.9 0 1 0 -3.8 0M328.4 445.0a1.9 1.9 0 1 0 3.8 0a1.9 1.9 0 1 0 -3.8 0M325.4 451.4a1.9 1.9 0 1 0 3.8 0a1.9 1.9 0 1 0 -3.8 0M322.1 457.6a1.9 1.9 0 1 0 3.8 0a1.9 1.9 0 1 0 -3.8 0M318.5 463.6a1.9 1.9 0 1 0 3.8 0a1.9 1.9 0 1 0 -3.8 0M314.6 469.4a1.9 1.9 0 1 0 3.8 0a1.9 1.9 0 1 0 -3.8 0M310.4 475.0a1.9 1.9 0 1 0 3.8 0a1.9 1.9 0 1 0 -3.8 0M305.9 480.4a1.9 1.9 0 1 0 3.8 0a1.9 1.9 0 1 0 -3.8 0M301.1 485.6a1.9 1.9 0 1 0 3.8 0a1.9 1.9 0 1 0 -3.8 0M296.1 490.5a1.9 1.9 0 1 0 3.8 0a1.9 1.9 0 1 0 -3.8 0M290.8 495.1a1.9 1.9 0 1 0 3.8 0a1.9 1.9 0 1 0 -3.8 0M285.3 499.4a1.9 1.9 0 1 0 3.8 0a1.9 1.9 0 1 0 -3.8 0M279.6 503.5a1.9 1.9 0 1 0 3.8 0a1.9 1.9 0 1 0 -3.8 0M273.7 507.3a1.9 1.9 0 1 0 3.8 0a1.9 1.9 0 1 0 -3.8 0M267.6 510.7a1.9 1.9 0 1 0 3.8 0a1.9 1.9 0 1 0 -3.8 0M261.3 513.9a1.9 1.9 0 1 0 3.8 0a1.9 1.9 0 1 0 -3.8 0M254.9 516.7a1.9 1.9 0 1 0 3.8 0a1.9 1.9 0 1 0 -3.8 0M248.3 519.1a1.9 1.9 0 1 0 3.8 0a1.9 1.9 0 1 0 -3.8 0M241.7 521.3a1.9 1.9 0 1 0 3.8 0a1.9 1.9 0 1 0 -3.8 0M234.9 523.1a1.9 1.9 0 1 0 3.8 0a1.9 1.9 0 1 0 -3.8 0M228.0 524.5a1.9 1.9 0 1 0 3.8 0a1.9 1.9 0 1 0 -3.8 0M221.1 525.6a1.9 1.9 0 1 0 3.8 0a1.9 1.9 0 1 0 -3.8 0M214.1 526.3a1.9 1.9 0 1 0 3.8 0a1.9 1.9 0 1 0 -3.8 0M207.1 526.7a1.9 1.9 0 1 0 3.8 0a1.9 1.9 0 1 0 -3.8 0M200.1 526.7a1.9 1.9 0 1 0 3.8 0a1.9 1.9 0 1 0 -3.8 0M193.1 526.3a1.9 1.9 0 1 0 3.8 0a1.9 1.9 0 1 0 -3.8 0M186.1 525.6a1.9 1.9 0 1 0 3.8 0a1.9 1.9 0 1 0 -3.8 0M179.2 524.5a1.9 1.9 0 1 0 3.8 0a1.9 1.9 0 1 0 -3.8 0M172.3 523.1a1.9 1.9 0 1 0 3.8 0a1.9 1.9 0 1 0 -3.8 0M165.5 521.3a1.9 1.9 0 1 0 3.8 0a1.9 1.9 0 1 0 -3.8 0M158.9 519.1a1.9 1.9 0 1 0 3.8 0a1.9 1.9 0 1 0 -3.8 0M152.3 516.7a1.9 1.9 0 1 0 3.8 0a1.9 1.9 0 1 0 -3.8 0M145.9 513.9a1.9 1.9 0 1 0 3.8 0a1.9 1.9 0 1 0 -3.8 0M139.6 510.7a1.9 1.9 0 1 0 3.8 0a1.9 1.9 0 1 0 -3.8 0M133.5 507.3a1.9 1.9 0 1 0 3.8 0a1.9 1.9 0 1 0 -3.8 0M127.6 503.5a1.9 1.9 0 1 0 3.8 0a1.9 1.9 0 1 0 -3.8 0M121.9 499.4a1.9 1.9 0 1 0 3.8 0a1.9 1.9 0 1 0 -3.8 0M116.4 495.1a1.9 1.9 0 1 0 3.8 0a1.9 1.9 0 1 0 -3.8 0M111.1 490.5a1.9 1.9 0 1 0 3.8 0a1.9 1.9 0 1 0 -3.8 0M106.1 485.6a1.9 1.9 0 1 0 3.8 0a1.9 1.9 0 1 0 -3.8 0M101.3 480.4a1.9 1.9 0 1 0 3.8 0a1.9 1.9 0 1 0 -3.8 0M96.8 475.0a1.9 1.9 0 1 0 3.8 0a1.9 1.9 0 1 0 -3.8 0M92.6 469.4a1.9 1.9 0 1 0 3.8 0a1.9 1.9 0 1 0 -3.8 0M88.7 463.6a1.9 1.9 0 1 0 3.8 0a1.9 1.9 0 1 0 -3.8 0M85.1 457.6a1.9 1.9 0 1 0 3.8 0a1.9 1.9 0 1 0 -3.8 0M81.8 451.4a1.9 1.9 0 1 0 3.8 0a1.9 1.9 0 1 0 -3.8 0M78.8 445.0a1.9 1.9 0 1 0 3.8 0a1.9 1.9 0 1 0 -3.8 0M76.2 438.5a1.9 1.9 0 1 0 3.8 0a1.9 1.9 0 1 0 -3.8 0M73.9 431.9a1.9 1.9 0 1 0 3.8 0a1.9 1.9 0 1 0 -3.8 0M71.9 425.2a1.9 1.9 0 1 0 3.8 0a1.9 1.9 0 1 0 -3.8 0M70.3 418.4a1.9 1.9 0 1 0 3.8 0a1.9 1.9 0 1 0 -3.8 0M69.0 411.5a1.9 1.9 0 1 0 3.8 0a1.9 1.9 0 1 0 -3.8 0M68.1 404.5a1.9 1.9 0 1 0 3.8 0a1.9 1.9 0 1 0 -3.8 0M67.6 397.5a1.9 1.9 0 1 0 3.8 0a1.9 1.9 0 1 0 -3.8 0M67.4 390.5a1.9 1.9 0 1 0 3.8 0a1.9 1.9 0 1 0 -3.8 0M67.6 383.5a1.9 1.9 0 1 0 3.8 0a1.9 1.9 0 1 0 -3.8 0M68.1 376.5a1.9 1.9 0 1 0 3.8 0a1.9 1.9 0 1 0 -3.8 0M69.0 369.5a1.9 1.9 0 1 0 3.8 0a1.9 1.9 0 1 0 -3.8 0M70.3 362.6a1.9 1.9 0 1 0 3.8 0a1.9 1.9 0 1 0 -3.8 0M71.9 355.8a1.9 1.9 0 1 0 3.8 0a1.9 1.9 0 1 0 -3.8 0M73.9 349.1a1.9 1.9 0 1 0 3.8 0a1.9 1.9 0 1 0 -3.8 0M76.2 342.5a1.9 1.9 0 1 0 3.8 0a1.9 1.9 0 1 0 -3.8 0M78.8 336.0a1.9 1.9 0 1 0 3.8 0a1.9 1.9 0 1 0 -3.8 0M81.8 329.6a1.9 1.9 0 1 0 3.8 0a1.9 1.9 0 1 0 -3.8 0M85.1 323.4a1.9 1.9 0 1 0 3.8 0a1.9 1.9 0 1 0 -3.8 0M88.7 317.4a1.9 1.9 0 1 0 3.8 0a1.9 1.9 0 1 0 -3.8 0M92.6 311.6a1.9 1.9 0 1 0 3.8 0a1.9 1.9 0 1 0 -3.8 0M96.8 306.0a1.9 1.9 0 1 0 3.8 0a1.9 1.9 0 1 0 -3.8 0M101.3 300.6a1.9 1.9 0 1 0 3.8 0a1.9 1.9 0 1 0 -3.8 0M106.1 295.4a1.9 1.9 0 1 0 3.8 0a1.9 1.9 0 1 0 -3.8 0M111.1 290.5a1.9 1.9 0 1 0 3.8 0a1.9 1.9 0 1 0 -3.8 0M116.4 285.9a1.9 1.9 0 1 0 3.8 0a1.9 1.9 0 1 0 -3.8 0M121.9 281.6a1.9 1.9 0 1 0 3.8 0a1.9 1.9 0 1 0 -3.8 0M127.6 277.5a1.9 1.9 0 1 0 3.8 0a1.9 1.9 0 1 0 -3.8 0M133.5 273.7a1.9 1.9 0 1 0 3.8 0a1.9 1.9 0 1 0 -3.8 0M139.6 270.3a1.9 1.9 0 1 0 3.8 0a1.9 1.9 0 1 0 -3.8 0M145.9 267.1a1.9 1.9 0 1 0 3.8 0a1.9 1.9 0 1 0 -3.8 0M152.3 264.3a1.9 1.9 0 1 0 3.8 0a1.9 1.9 0 1 0 -3.8 0M158.9 261.9a1.9 1.9 0 1 0 3.8 0a1.9 1.9 0 1 0 -3.8 0M165.5 259.7a1.9 1.9 0 1 0 3.8 0a1.9 1.9 0 1 0 -3.8 0M172.3 257.9a1.9 1.9 0 1 0 3.8 0a1.9 1.9 0 1 0 -3.8 0M179.2 256.5a1.9 1.9 0 1 0 3.8 0a1.9 1.9 0 1 0 -3.8 0M186.1 255.4a1.9 1.9 0 1 0 3.8 0a1.9 1.9 0 1 0 -3.8 0M193.1 254.7a1.9 1.9 0 1 0 3.8 0a1.9 1.9 0 1 0 -3.8 0M200.1 254.3a1.9 1.9 0 1 0 3.8 0a1.9 1.9 0 1 0 -3.8 0M207.1 254.3a1.9 1.9 0 1 0 3.8 0a1.9 1.9 0 1 0 -3.8 0M214.1 254.7a1.9 1.9 0 1 0 3.8 0a1.9 1.9 0 1 0 -3.8 0M221.1 255.4a1.9 1.9 0 1 0 3.8 0a1.9 1.9 0 1 0 -3.8 0M228.0 256.5a1.9 1.9 0 1 0 3.8 0a1.9 1.9 0 1 0 -3.8 0M234.9 257.9a1.9 1.9 0 1 0 3.8 0a1.9 1.9 0 1 0 -3.8 0M241.7 259.7a1.9 1.9 0 1 0 3.8 0a1.9 1.9 0 1 0 -3.8 0M248.3 261.9a1.9 1.9 0 1 0 3.8 0a1.9 1.9 0 1 0 -3.8 0M254.9 264.3a1.9 1.9 0 1 0 3.8 0a1.9 1.9 0 1 0 -3.8 0M261.3 267.1a1.9 1.9 0 1 0 3.8 0a1.9 1.9 0 1 0 -3.8 0M267.6 270.3a1.9 1.9 0 1 0 3.8 0a1.9 1.9 0 1 0 -3.8 0M273.7 273.7a1.9 1.9 0 1 0 3.8 0a1.9 1.9 0 1 0 -3.8 0M279.6 277.5a1.9 1.9 0 1 0 3.8 0a1.9 1.9 0 1 0 -3.8 0M285.3 281.6a1.9 1.9 0 1 0 3.8 0a1.9 1.9 0 1 0 -3.8 0M290.8 285.9a1.9 1.9 0 1 0 3.8 0a1.9 1.9 0 1 0 -3.8 0M296.1 290.5a1.9 1.9 0 1 0 3.8 0a1.9 1.9 0 1 0 -3.8 0M301.1 295.4a1.9 1.9 0 1 0 3.8 0a1.9 1.9 0 1 0 -3.8 0M305.9 300.6a1.9 1.9 0 1 0 3.8 0a1.9 1.9 0 1 0 -3.8 0M331.0 342.5a1.9 1.9 0 1 0 3.8 0a1.9 1.9 0 1 0 -3.8 0M333.3 349.1a1.9 1.9 0 1 0 3.8 0a1.9 1.9 0 1 0 -3.8 0M335.3 355.8a1.9 1.9 0 1 0 3.8 0a1.9 1.9 0 1 0 -3.8 0M336.9 362.6a1.9 1.9 0 1 0 3.8 0a1.9 1.9 0 1 0 -3.8 0M338.2 369.5a1.9 1.9 0 1 0 3.8 0a1.9 1.9 0 1 0 -3.8 0M339.1 376.5a1.9 1.9 0 1 0 3.8 0a1.9 1.9 0 1 0 -3.8 0M339.6 383.5a1.9 1.9 0 1 0 3.8 0a1.9 1.9 0 1 0 -3.8 0"/><path fill="#454545" d="M335.6 393.9a1.65 1.65 0 1 0 3.3 0a1.65 1.65 0 1 0 -3.3 0M335.3 400.7a1.65 1.65 0 1 0 3.3 0a1.65 1.65 0 1 0 -3.3 0M334.6 407.4a1.65 1.65 0 1 0 3.3 0a1.65 1.65 0 1 0 -3.3 0M333.5 414.1a1.65 1.65 0 1 0 3.3 0a1.65 1.65 0 1 0 -3.3 0M332.1 420.8a1.65 1.65 0 1 0 3.3 0a1.65 1.65 0 1 0 -3.3 0M330.4 427.3a1.65 1.65 0 1 0 3.3 0a1.65 1.65 0 1 0 -3.3 0M328.3 433.8a1.65 1.65 0 1 0 3.3 0a1.65 1.65 0 1 0 -3.3 0M325.9 440.2a1.65 1.65 0 1 0 3.3 0a1.65 1.65 0 1 0 -3.3 0M323.2 446.4a1.65 1.65 0 1 0 3.3 0a1.65 1.65 0 1 0 -3.3 0M320.2 452.4a1.65 1.65 0 1 0 3.3 0a1.65 1.65 0 1 0 -3.3 0M316.8 458.3a1.65 1.65 0 1 0 3.3 0a1.65 1.65 0 1 0 -3.3 0M313.2 464.1a1.65 1.65 0 1 0 3.3 0a1.65 1.65 0 1 0 -3.3 0M309.3 469.6a1.65 1.65 0 1 0 3.3 0a1.65 1.65 0 1 0 -3.3 0M305.1 474.9a1.65 1.65 0 1 0 3.3 0a1.65 1.65 0 1 0 -3.3 0M300.6 480.0a1.65 1.65 0 1 0 3.3 0a1.65 1.65 0 1 0 -3.3 0M295.8 484.9a1.65 1.65 0 1 0 3.3 0a1.65 1.65 0 1 0 -3.3 0M290.9 489.5a1.65 1.65 0 1 0 3.3 0a1.65 1.65 0 1 0 -3.3 0M285.6 493.8a1.65 1.65 0 1 0 3.3 0a1.65 1.65 0 1 0 -3.3 0M280.2 497.9a1.65 1.65 0 1 0 3.3 0a1.65 1.65 0 1 0 -3.3 0M274.6 501.7a1.65 1.65 0 1 0 3.3 0a1.65 1.65 0 1 0 -3.3 0M268.8 505.2a1.65 1.65 0 1 0 3.3 0a1.65 1.65 0 1 0 -3.3 0M262.8 508.4a1.65 1.65 0 1 0 3.3 0a1.65 1.65 0 1 0 -3.3 0M256.6 511.3a1.65 1.65 0 1 0 3.3 0a1.65 1.65 0 1 0 -3.3 0M250.3 513.8a1.65 1.65 0 1 0 3.3 0a1.65 1.65 0 1 0 -3.3 0M243.9 516.1a1.65 1.65 0 1 0 3.3 0a1.65 1.65 0 1 0 -3.3 0M237.4 518.0a1.65 1.65 0 1 0 3.3 0a1.65 1.65 0 1 0 -3.3 0M230.8 519.5a1.65 1.65 0 1 0 3.3 0a1.65 1.65 0 1 0 -3.3 0M224.1 520.7a1.65 1.65 0 1 0 3.3 0a1.65 1.65 0 1 0 -3.3 0M217.4 521.6a1.65 1.65 0 1 0 3.3 0a1.65 1.65 0 1 0 -3.3 0M210.6 522.1a1.65 1.65 0 1 0 3.3 0a1.65 1.65 0 1 0 -3.3 0M203.8 522.3a1.65 1.65 0 1 0 3.3 0a1.65 1.65 0 1 0 -3.3 0M197.1 522.1a1.65 1.65 0 1 0 3.3 0a1.65 1.65 0 1 0 -3.3 0M190.3 521.6a1.65 1.65 0 1 0 3.3 0a1.65 1.65 0 1 0 -3.3 0M183.6 520.7a1.65 1.65 0 1 0 3.3 0a1.65 1.65 0 1 0 -3.3 0M176.9 519.5a1.65 1.65 0 1 0 3.3 0a1.65 1.65 0 1 0 -3.3 0M170.3 518.0a1.65 1.65 0 1 0 3.3 0a1.65 1.65 0 1 0 -3.3 0M163.8 516.1a1.65 1.65 0 1 0 3.3 0a1.65 1.65 0 1 0 -3.3 0M157.4 513.8a1.65 1.65 0 1 0 3.3 0a1.65 1.65 0 1 0 -3.3 0M151.1 511.3a1.65 1.65 0 1 0 3.3 0a1.65 1.65 0 1 0 -3.3 0M144.9 508.4a1.65 1.65 0 1 0 3.3 0a1.65 1.65 0 1 0 -3.3 0M138.9 505.2a1.65 1.65 0 1 0 3.3 0a1.65 1.65 0 1 0 -3.3 0M133.1 501.7a1.65 1.65 0 1 0 3.3 0a1.65 1.65 0 1 0 -3.3 0M127.5 497.9a1.65 1.65 0 1 0 3.3 0a1.65 1.65 0 1 0 -3.3 0M122.1 493.8a1.65 1.65 0 1 0 3.3 0a1.65 1.65 0 1 0 -3.3 0M116.8 489.5a1.65 1.65 0 1 0 3.3 0a1.65 1.65 0 1 0 -3.3 0M111.9 484.9a1.65 1.65 0 1 0 3.3 0a1.65 1.65 0 1 0 -3.3 0M107.1 480.0a1.65 1.65 0 1 0 3.3 0a1.65 1.65 0 1 0 -3.3 0M102.6 474.9a1.65 1.65 0 1 0 3.3 0a1.65 1.65 0 1 0 -3.3 0M98.4 469.6a1.65 1.65 0 1 0 3.3 0a1.65 1.65 0 1 0 -3.3 0M94.5 464.1a1.65 1.65 0 1 0 3.3 0a1.65 1.65 0 1 0 -3.3 0M90.9 458.3a1.65 1.65 0 1 0 3.3 0a1.65 1.65 0 1 0 -3.3 0M87.5 452.4a1.65 1.65 0 1 0 3.3 0a1.65 1.65 0 1 0 -3.3 0M84.5 446.4a1.65 1.65 0 1 0 3.3 0a1.65 1.65 0 1 0 -3.3 0M81.8 440.2a1.65 1.65 0 1 0 3.3 0a1.65 1.65 0 1 0 -3.3 0M79.4 433.8a1.65 1.65 0 1 0 3.3 0a1.65 1.65 0 1 0 -3.3 0M77.3 427.3a1.65 1.65 0 1 0 3.3 0a1.65 1.65 0 1 0 -3.3 0M75.6 420.8a1.65 1.65 0 1 0 3.3 0a1.65 1.65 0 1 0 -3.3 0M74.2 414.1a1.65 1.65 0 1 0 3.3 0a1.65 1.65 0 1 0 -3.3 0M73.1 407.4a1.65 1.65 0 1 0 3.3 0a1.65 1.65 0 1 0 -3.3 0M72.4 400.7a1.65 1.65 0 1 0 3.3 0a1.65 1.65 0 1 0 -3.3 0M72.1 393.9a1.65 1.65 0 1 0 3.3 0a1.65 1.65 0 1 0 -3.3 0M72.1 387.1a1.65 1.65 0 1 0 3.3 0a1.65 1.65 0 1 0 -3.3 0M72.4 380.3a1.65 1.65 0 1 0 3.3 0a1.65 1.65 0 1 0 -3.3 0M73.1 373.6a1.65 1.65 0 1 0 3.3 0a1.65 1.65 0 1 0 -3.3 0M74.2 366.9a1.65 1.65 0 1 0 3.3 0a1.65 1.65 0 1 0 -3.3 0M75.6 360.2a1.65 1.65 0 1 0 3.3 0a1.65 1.65 0 1 0 -3.3 0M77.3 353.7a1.65 1.65 0 1 0 3.3 0a1.65 1.65 0 1 0 -3.3 0M79.4 347.2a1.65 1.65 0 1 0 3.3 0a1.65 1.65 0 1 0 -3.3 0M81.8 340.8a1.65 1.65 0 1 0 3.3 0a1.65 1.65 0 1 0 -3.3 0M84.5 334.6a1.65 1.65 0 1 0 3.3 0a1.65 1.65 0 1 0 -3.3 0M87.5 328.6a1.65 1.65 0 1 0 3.3 0a1.65 1.65 0 1 0 -3.3 0M90.9 322.7a1.65 1.65 0 1 0 3.3 0a1.65 1.65 0 1 0 -3.3 0M94.5 316.9a1.65 1.65 0 1 0 3.3 0a1.65 1.65 0 1 0 -3.3 0M98.4 311.4a1.65 1.65 0 1 0 3.3 0a1.65 1.65 0 1 0 -3.3 0M102.6 306.1a1.65 1.65 0 1 0 3.3 0a1.65 1.65 0 1 0 -3.3 0M107.1 301.0a1.65 1.65 0 1 0 3.3 0a1.65 1.65 0 1 0 -3.3 0M111.9 296.1a1.65 1.65 0 1 0 3.3 0a1.65 1.65 0 1 0 -3.3 0M116.8 291.5a1.65 1.65 0 1 0 3.3 0a1.65 1.65 0 1 0 -3.3 0M122.1 287.2a1.65 1.65 0 1 0 3.3 0a1.65 1.65 0 1 0 -3.3 0M127.5 283.1a1.65 1.65 0 1 0 3.3 0a1.65 1.65 0 1 0 -3.3 0M133.1 279.3a1.65 1.65 0 1 0 3.3 0a1.65 1.65 0 1 0 -3.3 0M138.9 275.8a1.65 1.65 0 1 0 3.3 0a1.65 1.65 0 1 0 -3.3 0M144.9 272.6a1.65 1.65 0 1 0 3.3 0a1.65 1.65 0 1 0 -3.3 0M151.1 269.7a1.65 1.65 0 1 0 3.3 0a1.65 1.65 0 1 0 -3.3 0M157.4 267.2a1.65 1.65 0 1 0 3.3 0a1.65 1.65 0 1 0 -3.3 0M163.8 264.9a1.65 1.65 0 1 0 3.3 0a1.65 1.65 0 1 0 -3.3 0M170.3 263.0a1.65 1.65 0 1 0 3.3 0a1.65 1.65 0 1 0 -3.3 0M176.9 261.5a1.65 1.65 0 1 0 3.3 0a1.65 1.65 0 1 0 -3.3 0M183.6 260.3a1.65 1.65 0 1 0 3.3 0a1.65 1.65 0 1 0 -3.3 0M190.3 259.4a1.65 1.65 0 1 0 3.3 0a1.65 1.65 0 1 0 -3.3 0M197.1 258.9a1.65 1.65 0 1 0 3.3 0a1.65 1.65 0 1 0 -3.3 0M203.8 258.7a1.65 1.65 0 1 0 3.3 0a1.65 1.65 0 1 0 -3.3 0M210.6 258.9a1.65 1.65 0 1 0 3.3 0a1.65 1.65 0 1 0 -3.3 0M217.4 259.4a1.65 1.65 0 1 0 3.3 0a1.65 1.65 0 1 0 -3.3 0M224.1 260.3a1.65 1.65 0 1 0 3.3 0a1.65 1.65 0 1 0 -3.3 0M230.8 261.5a1.65 1.65 0 1 0 3.3 0a1.65 1.65 0 1 0 -3.3 0M237.4 263.0a1.65 1.65 0 1 0 3.3 0a1.65 1.65 0 1 0 -3.3 0M243.9 264.9a1.65 1.65 0 1 0 3.3 0a1.65 1.65 0 1 0 -3.3 0M250.3 267.2a1.65 1.65 0 1 0 3.3 0a1.65 1.65 0 1 0 -3.3 0M256.6 269.7a1.65 1.65 0 1 0 3.3 0a1.65 1.65 0 1 0 -3.3 0M262.8 272.6a1.65 1.65 0 1 0 3.3 0a1.65 1.65 0 1 0 -3.3 0M268.8 275.8a1.65 1.65 0 1 0 3.3 0a1.65 1.65 0 1 0 -3.3 0M274.6 279.3a1.65 1.65 0 1 0 3.3 0a1.65 1.65 0 1 0 -3.3 0M280.2 283.1a1.65 1.65 0 1 0 3.3 0a1.65 1.65 0 1 0 -3.3 0M285.6 287.2a1.65 1.65 0 1 0 3.3 0a1.65 1.65 0 1 0 -3.3 0M290.9 291.5a1.65 1.65 0 1 0 3.3 0a1.65 1.65 0 1 0 -3.3 0M295.8 296.1a1.65 1.65 0 1 0 3.3 0a1.65 1.65 0 1 0 -3.3 0M300.6 301.0a1.65 1.65 0 1 0 3.3 0a1.65 1.65 0 1 0 -3.3 0M305.1 306.1a1.65 1.65 0 1 0 3.3 0a1.65 1.65 0 1 0 -3.3 0M328.3 347.2a1.65 1.65 0 1 0 3.3 0a1.65 1.65 0 1 0 -3.3 0M330.4 353.7a1.65 1.65 0 1 0 3.3 0a1.65 1.65 0 1 0 -3.3 0M332.1 360.2a1.65 1.65 0 1 0 3.3 0a1.65 1.65 0 1 0 -3.3 0M333.5 366.9a1.65 1.65 0 1 0 3.3 0a1.65 1.65 0 1 0 -3.3 0M334.6 373.6a1.65 1.65 0 1 0 3.3 0a1.65 1.65 0 1 0 -3.3 0M335.3 380.3a1.65 1.65 0 1 0 3.3 0a1.65 1.65 0 1 0 -3.3 0M335.6 387.1a1.65 1.65 0 1 0 3.3 0a1.65 1.65 0 1 0 -3.3 0"/><path fill="#3e3e3e" d="M331.8 390.5a1.3 1.3 0 1 0 2.6 0a1.3 1.3 0 1 0 -2.6 0M331.6 397.1a1.3 1.3 0 1 0 2.6 0a1.3 1.3 0 1 0 -2.6 0M331.1 403.6a1.3 1.3 0 1 0 2.6 0a1.3 1.3 0 1 0 -2.6 0M330.3 410.1a1.3 1.3 0 1 0 2.6 0a1.3 1.3 0 1 0 -2.6 0M329.1 416.6a1.3 1.3 0 1 0 2.6 0a1.3 1.3 0 1 0 -2.6 0M327.6 423.0a1.3 1.3 0 1 0 2.6 0a1.3 1.3 0 1 0 -2.6 0M325.8 429.3a1.3 1.3 0 1 0 2.6 0a1.3 1.3 0 1 0 -2.6 0M323.6 435.5a1.3 1.3 0 1 0 2.6 0a1.3 1.3 0 1 0 -2.6 0M321.1 441.6a1.3 1.3 0 1 0 2.6 0a1.3 1.3 0 1 0 -2.6 0M318.3 447.5a1.3 1.3 0 1 0 2.6 0a1.3 1.3 0 1 0 -2.6 0M315.2 453.3a1.3 1.3 0 1 0 2.6 0a1.3 1.3 0 1 0 -2.6 0M311.9 459.0a1.3 1.3 0 1 0 2.6 0a1.3 1.3 0 1 0 -2.6 0M308.2 464.4a1.3 1.3 0 1 0 2.6 0a1.3 1.3 0 1 0 -2.6 0M304.3 469.7a1.3 1.3 0 1 0 2.6 0a1.3 1.3 0 1 0 -2.6 0M300.0 474.7a1.3 1.3 0 1 0 2.6 0a1.3 1.3 0 1 0 -2.6 0M295.6 479.6a1.3 1.3 0 1 0 2.6 0a1.3 1.3 0 1 0 -2.6 0M290.9 484.1a1.3 1.3 0 1 0 2.6 0a1.3 1.3 0 1 0 -2.6 0M285.9 488.5a1.3 1.3 0 1 0 2.6 0a1.3 1.3 0 1 0 -2.6 0M280.8 492.6a1.3 1.3 0 1 0 2.6 0a1.3 1.3 0 1 0 -2.6 0M275.4 496.4a1.3 1.3 0 1 0 2.6 0a1.3 1.3 0 1 0 -2.6 0M269.9 499.9a1.3 1.3 0 1 0 2.6 0a1.3 1.3 0 1 0 -2.6 0M264.2 503.1a1.3 1.3 0 1 0 2.6 0a1.3 1.3 0 1 0 -2.6 0M258.3 506.1a1.3 1.3 0 1 0 2.6 0a1.3 1.3 0 1 0 -2.6 0M252.3 508.7a1.3 1.3 0 1 0 2.6 0a1.3 1.3 0 1 0 -2.6 0M246.1 511.0a1.3 1.3 0 1 0 2.6 0a1.3 1.3 0 1 0 -2.6 0M239.9 513.0a1.3 1.3 0 1 0 2.6 0a1.3 1.3 0 1 0 -2.6 0M233.5 514.7a1.3 1.3 0 1 0 2.6 0a1.3 1.3 0 1 0 -2.6 0M227.1 516.0a1.3 1.3 0 1 0 2.6 0a1.3 1.3 0 1 0 -2.6 0M220.6 517.0a1.3 1.3 0 1 0 2.6 0a1.3 1.3 0 1 0 -2.6 0M214.0 517.7a1.3 1.3 0 1 0 2.6 0a1.3 1.3 0 1 0 -2.6 0M207.5 518.1a1.3 1.3 0 1 0 2.6 0a1.3 1.3 0 1 0 -2.6 0M200.9 518.1a1.3 1.3 0 1 0 2.6 0a1.3 1.3 0 1 0 -2.6 0M194.4 517.7a1.3 1.3 0 1 0 2.6 0a1.3 1.3 0 1 0 -2.6 0M187.8 517.0a1.3 1.3 0 1 0 2.6 0a1.3 1.3 0 1 0 -2.6 0M181.3 516.0a1.3 1.3 0 1 0 2.6 0a1.3 1.3 0 1 0 -2.6 0M174.9 514.7a1.3 1.3 0 1 0 2.6 0a1.3 1.3 0 1 0 -2.6 0M168.5 513.0a1.3 1.3 0 1 0 2.6 0a1.3 1.3 0 1 0 -2.6 0M162.3 511.0a1.3 1.3 0 1 0 2.6 0a1.3 1.3 0 1 0 -2.6 0M156.1 508.7a1.3 1.3 0 1 0 2.6 0a1.3 1.3 0 1 0 -2.6 0M150.1 506.1a1.3 1.3 0 1 0 2.6 0a1.3 1.3 0 1 0 -2.6 0M144.2 503.1a1.3 1.3 0 1 0 2.6 0a1.3 1.3 0 1 0 -2.6 0M138.5 499.9a1.3 1.3 0 1 0 2.6 0a1.3 1.3 0 1 0 -2.6 0M133.0 496.4a1.3 1.3 0 1 0 2.6 0a1.3 1.3 0 1 0 -2.6 0M127.6 492.6a1.3 1.3 0 1 0 2.6 0a1.3 1.3 0 1 0 -2.6 0M122.5 488.5a1.3 1.3 0 1 0 2.6 0a1.3 1.3 0 1 0 -2.6 0M117.5 484.1a1.3 1.3 0 1 0 2.6 0a1.3 1.3 0 1 0 -2.6 0M112.8 479.6a1.3 1.3 0 1 0 2.6 0a1.3 1.3 0 1 0 -2.6 0M108.4 474.7a1.3 1.3 0 1 0 2.6 0a1.3 1.3 0 1 0 -2.6 0M104.1 469.7a1.3 1.3 0 1 0 2.6 0a1.3 1.3 0 1 0 -2.6 0M100.2 464.4a1.3 1.3 0 1 0 2.6 0a1.3 1.3 0 1 0 -2.6 0M96.5 459.0a1.3 1.3 0 1 0 2.6 0a1.3 1.3 0 1 0 -2.6 0M93.2 453.3a1.3 1.3 0 1 0 2.6 0a1.3 1.3 0 1 0 -2.6 0M90.1 447.5a1.3 1.3 0 1 0 2.6 0a1.3 1.3 0 1 0 -2.6 0M87.3 441.6a1.3 1.3 0 1 0 2.6 0a1.3 1.3 0 1 0 -2.6 0M84.8 435.5a1.3 1.3 0 1 0 2.6 0a1.3 1.3 0 1 0 -2.6 0M82.6 429.3a1.3 1.3 0 1 0 2.6 0a1.3 1.3 0 1 0 -2.6 0M80.8 423.0a1.3 1.3 0 1 0 2.6 0a1.3 1.3 0 1 0 -2.6 0M79.3 416.6a1.3 1.3 0 1 0 2.6 0a1.3 1.3 0 1 0 -2.6 0M78.1 410.1a1.3 1.3 0 1 0 2.6 0a1.3 1.3 0 1 0 -2.6 0M77.3 403.6a1.3 1.3 0 1 0 2.6 0a1.3 1.3 0 1 0 -2.6 0M76.8 397.1a1.3 1.3 0 1 0 2.6 0a1.3 1.3 0 1 0 -2.6 0M76.6 390.5a1.3 1.3 0 1 0 2.6 0a1.3 1.3 0 1 0 -2.6 0M76.8 383.9a1.3 1.3 0 1 0 2.6 0a1.3 1.3 0 1 0 -2.6 0M77.3 377.4a1.3 1.3 0 1 0 2.6 0a1.3 1.3 0 1 0 -2.6 0M78.1 370.9a1.3 1.3 0 1 0 2.6 0a1.3 1.3 0 1 0 -2.6 0M79.3 364.4a1.3 1.3 0 1 0 2.6 0a1.3 1.3 0 1 0 -2.6 0M80.8 358.0a1.3 1.3 0 1 0 2.6 0a1.3 1.3 0 1 0 -2.6 0M82.6 351.7a1.3 1.3 0 1 0 2.6 0a1.3 1.3 0 1 0 -2.6 0M84.8 345.5a1.3 1.3 0 1 0 2.6 0a1.3 1.3 0 1 0 -2.6 0M87.3 339.4a1.3 1.3 0 1 0 2.6 0a1.3 1.3 0 1 0 -2.6 0M90.1 333.5a1.3 1.3 0 1 0 2.6 0a1.3 1.3 0 1 0 -2.6 0M93.2 327.7a1.3 1.3 0 1 0 2.6 0a1.3 1.3 0 1 0 -2.6 0M96.5 322.0a1.3 1.3 0 1 0 2.6 0a1.3 1.3 0 1 0 -2.6 0M100.2 316.6a1.3 1.3 0 1 0 2.6 0a1.3 1.3 0 1 0 -2.6 0M104.1 311.3a1.3 1.3 0 1 0 2.6 0a1.3 1.3 0 1 0 -2.6 0M108.4 306.3a1.3 1.3 0 1 0 2.6 0a1.3 1.3 0 1 0 -2.6 0M112.8 301.4a1.3 1.3 0 1 0 2.6 0a1.3 1.3 0 1 0 -2.6 0M117.5 296.9a1.3 1.3 0 1 0 2.6 0a1.3 1.3 0 1 0 -2.6 0M122.5 292.5a1.3 1.3 0 1 0 2.6 0a1.3 1.3 0 1 0 -2.6 0M127.6 288.4a1.3 1.3 0 1 0 2.6 0a1.3 1.3 0 1 0 -2.6 0M133.0 284.6a1.3 1.3 0 1 0 2.6 0a1.3 1.3 0 1 0 -2.6 0M138.5 281.1a1.3 1.3 0 1 0 2.6 0a1.3 1.3 0 1 0 -2.6 0M144.2 277.9a1.3 1.3 0 1 0 2.6 0a1.3 1.3 0 1 0 -2.6 0M150.1 274.9a1.3 1.3 0 1 0 2.6 0a1.3 1.3 0 1 0 -2.6 0M156.1 272.3a1.3 1.3 0 1 0 2.6 0a1.3 1.3 0 1 0 -2.6 0M162.3 270.0a1.3 1.3 0 1 0 2.6 0a1.3 1.3 0 1 0 -2.6 0M168.5 268.0a1.3 1.3 0 1 0 2.6 0a1.3 1.3 0 1 0 -2.6 0M174.9 266.3a1.3 1.3 0 1 0 2.6 0a1.3 1.3 0 1 0 -2.6 0M181.3 265.0a1.3 1.3 0 1 0 2.6 0a1.3 1.3 0 1 0 -2.6 0M187.8 264.0a1.3 1.3 0 1 0 2.6 0a1.3 1.3 0 1 0 -2.6 0M194.4 263.3a1.3 1.3 0 1 0 2.6 0a1.3 1.3 0 1 0 -2.6 0M200.9 262.9a1.3 1.3 0 1 0 2.6 0a1.3 1.3 0 1 0 -2.6 0M207.5 262.9a1.3 1.3 0 1 0 2.6 0a1.3 1.3 0 1 0 -2.6 0M214.0 263.3a1.3 1.3 0 1 0 2.6 0a1.3 1.3 0 1 0 -2.6 0M220.6 264.0a1.3 1.3 0 1 0 2.6 0a1.3 1.3 0 1 0 -2.6 0M227.1 265.0a1.3 1.3 0 1 0 2.6 0a1.3 1.3 0 1 0 -2.6 0M233.5 266.3a1.3 1.3 0 1 0 2.6 0a1.3 1.3 0 1 0 -2.6 0M239.9 268.0a1.3 1.3 0 1 0 2.6 0a1.3 1.3 0 1 0 -2.6 0M246.1 270.0a1.3 1.3 0 1 0 2.6 0a1.3 1.3 0 1 0 -2.6 0M252.3 272.3a1.3 1.3 0 1 0 2.6 0a1.3 1.3 0 1 0 -2.6 0M258.3 274.9a1.3 1.3 0 1 0 2.6 0a1.3 1.3 0 1 0 -2.6 0M264.2 277.9a1.3 1.3 0 1 0 2.6 0a1.3 1.3 0 1 0 -2.6 0M269.9 281.1a1.3 1.3 0 1 0 2.6 0a1.3 1.3 0 1 0 -2.6 0M275.4 284.6a1.3 1.3 0 1 0 2.6 0a1.3 1.3 0 1 0 -2.6 0M280.8 288.4a1.3 1.3 0 1 0 2.6 0a1.3 1.3 0 1 0 -2.6 0M285.9 292.5a1.3 1.3 0 1 0 2.6 0a1.3 1.3 0 1 0 -2.6 0M290.9 296.9a1.3 1.3 0 1 0 2.6 0a1.3 1.3 0 1 0 -2.6 0M295.6 301.4a1.3 1.3 0 1 0 2.6 0a1.3 1.3 0 1 0 -2.6 0M300.0 306.3a1.3 1.3 0 1 0 2.6 0a1.3 1.3 0 1 0 -2.6 0M323.6 345.5a1.3 1.3 0 1 0 2.6 0a1.3 1.3 0 1 0 -2.6 0M325.8 351.7a1.3 1.3 0 1 0 2.6 0a1.3 1.3 0 1 0 -2.6 0M327.6 358.0a1.3 1.3 0 1 0 2.6 0a1.3 1.3 0 1 0 -2.6 0M329.1 364.4a1.3 1.3 0 1 0 2.6 0a1.3 1.3 0 1 0 -2.6 0M330.3 370.9a1.3 1.3 0 1 0 2.6 0a1.3 1.3 0 1 0 -2.6 0M331.1 377.4a1.3 1.3 0 1 0 2.6 0a1.3 1.3 0 1 0 -2.6 0M331.6 383.9a1.3 1.3 0 1 0 2.6 0a1.3 1.3 0 1 0 -2.6 0"/><path fill="#383838" d="M328.3 393.7a1.0 1.0 0 1 0 2.0 0a1.0 1.0 0 1 0 -2.0 0M327.9 400.1a1.0 1.0 0 1 0 2.0 0a1.0 1.0 0 1 0 -2.0 0M327.3 406.4a1.0 1.0 0 1 0 2.0 0a1.0 1.0 0 1 0 -2.0 0M326.3 412.7a1.0 1.0 0 1 0 2.0 0a1.0 1.0 0 1 0 -2.0 0M325.0 418.9a1.0 1.0 0 1 0 2.0 0a1.0 1.0 0 1 0 -2.0 0M323.4 425.1a1.0 1.0 0 1 0 2.0 0a1.0 1.0 0 1 0 -2.0 0M321.4 431.2a1.0 1.0 0 1 0 2.0 0a1.0 1.0 0 1 0 -2.0 0M319.2 437.1a1.0 1.0 0 1 0 2.0 0a1.0 1.0 0 1 0 -2.0 0M316.6 443.0a1.0 1.0 0 1 0 2.0 0a1.0 1.0 0 1 0 -2.0 0M313.8 448.7a1.0 1.0 0 1 0 2.0 0a1.0 1.0 0 1 0 -2.0 0M310.6 454.2a1.0 1.0 0 1 0 2.0 0a1.0 1.0 0 1 0 -2.0 0M307.2 459.6a1.0 1.0 0 1 0 2.0 0a1.0 1.0 0 1 0 -2.0 0M303.5 464.8a1.0 1.0 0 1 0 2.0 0a1.0 1.0 0 1 0 -2.0 0M299.6 469.8a1.0 1.0 0 1 0 2.0 0a1.0 1.0 0 1 0 -2.0 0M295.4 474.6a1.0 1.0 0 1 0 2.0 0a1.0 1.0 0 1 0 -2.0 0M290.9 479.2a1.0 1.0 0 1 0 2.0 0a1.0 1.0 0 1 0 -2.0 0M286.2 483.5a1.0 1.0 0 1 0 2.0 0a1.0 1.0 0 1 0 -2.0 0M281.3 487.6a1.0 1.0 0 1 0 2.0 0a1.0 1.0 0 1 0 -2.0 0M276.2 491.4a1.0 1.0 0 1 0 2.0 0a1.0 1.0 0 1 0 -2.0 0M270.9 495.0a1.0 1.0 0 1 0 2.0 0a1.0 1.0 0 1 0 -2.0 0M265.5 498.2a1.0 1.0 0 1 0 2.0 0a1.0 1.0 0 1 0 -2.0 0M259.9 501.2a1.0 1.0 0 1 0 2.0 0a1.0 1.0 0 1 0 -2.0 0M254.1 503.9a1.0 1.0 0 1 0 2.0 0a1.0 1.0 0 1 0 -2.0 0M248.2 506.3a1.0 1.0 0 1 0 2.0 0a1.0 1.0 0 1 0 -2.0 0M242.1 508.4a1.0 1.0 0 1 0 2.0 0a1.0 1.0 0 1 0 -2.0 0M236.0 510.2a1.0 1.0 0 1 0 2.0 0a1.0 1.0 0 1 0 -2.0 0M229.8 511.7a1.0 1.0 0 1 0 2.0 0a1.0 1.0 0 1 0 -2.0 0M223.6 512.8a1.0 1.0 0 1 0 2.0 0a1.0 1.0 0 1 0 -2.0 0M217.2 513.6a1.0 1.0 0 1 0 2.0 0a1.0 1.0 0 1 0 -2.0 0M210.9 514.1a1.0 1.0 0 1 0 2.0 0a1.0 1.0 0 1 0 -2.0 0M204.5 514.3a1.0 1.0 0 1 0 2.0 0a1.0 1.0 0 1 0 -2.0 0M198.1 514.1a1.0 1.0 0 1 0 2.0 0a1.0 1.0 0 1 0 -2.0 0M191.8 513.6a1.0 1.0 0 1 0 2.0 0a1.0 1.0 0 1 0 -2.0 0M185.4 512.8a1.0 1.0 0 1 0 2.0 0a1.0 1.0 0 1 0 -2.0 0M179.2 511.7a1.0 1.0 0 1 0 2.0 0a1.0 1.0 0 1 0 -2.0 0M173.0 510.2a1.0 1.0 0 1 0 2.0 0a1.0 1.0 0 1 0 -2.0 0M166.9 508.4a1.0 1.0 0 1 0 2.0 0a1.0 1.0 0 1 0 -2.0 0M160.8 506.3a1.0 1.0 0 1 0 2.0 0a1.0 1.0 0 1 0 -2.0 0M154.9 503.9a1.0 1.0 0 1 0 2.0 0a1.0 1.0 0 1 0 -2.0 0M149.1 501.2a1.0 1.0 0 1 0 2.0 0a1.0 1.0 0 1 0 -2.0 0M143.5 498.2a1.0 1.0 0 1 0 2.0 0a1.0 1.0 0 1 0 -2.0 0M138.1 495.0a1.0 1.0 0 1 0 2.0 0a1.0 1.0 0 1 0 -2.0 0M132.8 491.4a1.0 1.0 0 1 0 2.0 0a1.0 1.0 0 1 0 -2.0 0M127.7 487.6a1.0 1.0 0 1 0 2.0 0a1.0 1.0 0 1 0 -2.0 0M122.8 483.5a1.0 1.0 0 1 0 2.0 0a1.0 1.0 0 1 0 -2.0 0M118.1 479.2a1.0 1.0 0 1 0 2.0 0a1.0 1.0 0 1 0 -2.0 0M113.6 474.6a1.0 1.0 0 1 0 2.0 0a1.0 1.0 0 1 0 -2.0 0M109.4 469.8a1.0 1.0 0 1 0 2.0 0a1.0 1.0 0 1 0 -2.0 0M105.5 464.8a1.0 1.0 0 1 0 2.0 0a1.0 1.0 0 1 0 -2.0 0M101.8 459.6a1.0 1.0 0 1 0 2.0 0a1.0 1.0 0 1 0 -2.0 0M98.4 454.2a1.0 1.0 0 1 0 2.0 0a1.0 1.0 0 1 0 -2.0 0M95.2 448.7a1.0 1.0 0 1 0 2.0 0a1.0 1.0 0 1 0 -2.0 0M92.4 443.0a1.0 1.0 0 1 0 2.0 0a1.0 1.0 0 1 0 -2.0 0M89.8 437.1a1.0 1.0 0 1 0 2.0 0a1.0 1.0 0 1 0 -2.0 0M87.6 431.2a1.0 1.0 0 1 0 2.0 0a1.0 1.0 0 1 0 -2.0 0M85.6 425.1a1.0 1.0 0 1 0 2.0 0a1.0 1.0 0 1 0 -2.0 0M84.0 418.9a1.0 1.0 0 1 0 2.0 0a1.0 1.0 0 1 0 -2.0 0M82.7 412.7a1.0 1.0 0 1 0 2.0 0a1.0 1.0 0 1 0 -2.0 0M81.7 406.4a1.0 1.0 0 1 0 2.0 0a1.0 1.0 0 1 0 -2.0 0M81.1 400.1a1.0 1.0 0 1 0 2.0 0a1.0 1.0 0 1 0 -2.0 0M80.7 393.7a1.0 1.0 0 1 0 2.0 0a1.0 1.0 0 1 0 -2.0 0M80.7 387.3a1.0 1.0 0 1 0 2.0 0a1.0 1.0 0 1 0 -2.0 0M81.1 380.9a1.0 1.0 0 1 0 2.0 0a1.0 1.0 0 1 0 -2.0 0M81.7 374.6a1.0 1.0 0 1 0 2.0 0a1.0 1.0 0 1 0 -2.0 0M82.7 368.3a1.0 1.0 0 1 0 2.0 0a1.0 1.0 0 1 0 -2.0 0M84.0 362.1a1.0 1.0 0 1 0 2.0 0a1.0 1.0 0 1 0 -2.0 0M85.6 355.9a1.0 1.0 0 1 0 2.0 0a1.0 1.0 0 1 0 -2.0 0M87.6 349.8a1.0 1.0 0 1 0 2.0 0a1.0 1.0 0 1 0 -2.0 0M89.8 343.9a1.0 1.0 0 1 0 2.0 0a1.0 1.0 0 1 0 -2.0 0M92.4 338.0a1.0 1.0 0 1 0 2.0 0a1.0 1.0 0 1 0 -2.0 0M95.2 332.3a1.0 1.0 0 1 0 2.0 0a1.0 1.0 0 1 0 -2.0 0M98.4 326.8a1.0 1.0 0 1 0 2.0 0a1.0 1.0 0 1 0 -2.0 0M101.8 321.4a1.0 1.0 0 1 0 2.0 0a1.0 1.0 0 1 0 -2.0 0M105.5 316.2a1.0 1.0 0 1 0 2.0 0a1.0 1.0 0 1 0 -2.0 0M109.4 311.2a1.0 1.0 0 1 0 2.0 0a1.0 1.0 0 1 0 -2.0 0M113.6 306.4a1.0 1.0 0 1 0 2.0 0a1.0 1.0 0 1 0 -2.0 0M118.1 301.8a1.0 1.0 0 1 0 2.0 0a1.0 1.0 0 1 0 -2.0 0M122.8 297.5a1.0 1.0 0 1 0 2.0 0a1.0 1.0 0 1 0 -2.0 0M127.7 293.4a1.0 1.0 0 1 0 2.0 0a1.0 1.0 0 1 0 -2.0 0M132.8 289.6a1.0 1.0 0 1 0 2.0 0a1.0 1.0 0 1 0 -2.0 0M138.1 286.0a1.0 1.0 0 1 0 2.0 0a1.0 1.0 0 1 0 -2.0 0M143.5 282.8a1.0 1.0 0 1 0 2.0 0a1.0 1.0 0 1 0 -2.0 0M149.1 279.8a1.0 1.0 0 1 0 2.0 0a1.0 1.0 0 1 0 -2.0 0M154.9 277.1a1.0 1.0 0 1 0 2.0 0a1.0 1.0 0 1 0 -2.0 0M160.8 274.7a1.0 1.0 0 1 0 2.0 0a1.0 1.0 0 1 0 -2.0 0M166.9 272.6a1.0 1.0 0 1 0 2.0 0a1.0 1.0 0 1 0 -2.0 0M173.0 270.8a1.0 1.0 0 1 0 2.0 0a1.0 1.0 0 1 0 -2.0 0M179.2 269.3a1.0 1.0 0 1 0 2.0 0a1.0 1.0 0 1 0 -2.0 0M185.4 268.2a1.0 1.0 0 1 0 2.0 0a1.0 1.0 0 1 0 -2.0 0M191.8 267.4a1.0 1.0 0 1 0 2.0 0a1.0 1.0 0 1 0 -2.0 0M198.1 266.9a1.0 1.0 0 1 0 2.0 0a1.0 1.0 0 1 0 -2.0 0M204.5 266.7a1.0 1.0 0 1 0 2.0 0a1.0 1.0 0 1 0 -2.0 0M210.9 266.9a1.0 1.0 0 1 0 2.0 0a1.0 1.0 0 1 0 -2.0 0M217.2 267.4a1.0 1.0 0 1 0 2.0 0a1.0 1.0 0 1 0 -2.0 0M223.6 268.2a1.0 1.0 0 1 0 2.0 0a1.0 1.0 0 1 0 -2.0 0M229.8 269.3a1.0 1.0 0 1 0 2.0 0a1.0 1.0 0 1 0 -2.0 0M236.0 270.8a1.0 1.0 0 1 0 2.0 0a1.0 1.0 0 1 0 -2.0 0M242.1 272.6a1.0 1.0 0 1 0 2.0 0a1.0 1.0 0 1 0 -2.0 0M248.2 274.7a1.0 1.0 0 1 0 2.0 0a1.0 1.0 0 1 0 -2.0 0M254.1 277.1a1.0 1.0 0 1 0 2.0 0a1.0 1.0 0 1 0 -2.0 0M259.9 279.8a1.0 1.0 0 1 0 2.0 0a1.0 1.0 0 1 0 -2.0 0M265.5 282.8a1.0 1.0 0 1 0 2.0 0a1.0 1.0 0 1 0 -2.0 0M270.9 286.0a1.0 1.0 0 1 0 2.0 0a1.0 1.0 0 1 0 -2.0 0M276.2 289.6a1.0 1.0 0 1 0 2.0 0a1.0 1.0 0 1 0 -2.0 0M281.3 293.4a1.0 1.0 0 1 0 2.0 0a1.0 1.0 0 1 0 -2.0 0M286.2 297.5a1.0 1.0 0 1 0 2.0 0a1.0 1.0 0 1 0 -2.0 0M290.9 301.8a1.0 1.0 0 1 0 2.0 0a1.0 1.0 0 1 0 -2.0 0M295.4 306.4a1.0 1.0 0 1 0 2.0 0a1.0 1.0 0 1 0 -2.0 0M299.6 311.2a1.0 1.0 0 1 0 2.0 0a1.0 1.0 0 1 0 -2.0 0M321.4 349.8a1.0 1.0 0 1 0 2.0 0a1.0 1.0 0 1 0 -2.0 0M323.4 355.9a1.0 1.0 0 1 0 2.0 0a1.0 1.0 0 1 0 -2.0 0M325.0 362.1a1.0 1.0 0 1 0 2.0 0a1.0 1.0 0 1 0 -2.0 0M326.3 368.3a1.0 1.0 0 1 0 2.0 0a1.0 1.0 0 1 0 -2.0 0M327.3 374.6a1.0 1.0 0 1 0 2.0 0a1.0 1.0 0 1 0 -2.0 0M327.9 380.9a1.0 1.0 0 1 0 2.0 0a1.0 1.0 0 1 0 -2.0 0M328.3 387.3a1.0 1.0 0 1 0 2.0 0a1.0 1.0 0 1 0 -2.0 0"/><path fill="#303030" d="M325.0 390.5a0.7 0.7 0 1 0 1.4 0a0.7 0.7 0 1 0 -1.4 0M324.8 396.7a0.7 0.7 0 1 0 1.4 0a0.7 0.7 0 1 0 -1.4 0M324.4 402.9a0.7 0.7 0 1 0 1.4 0a0.7 0.7 0 1 0 -1.4 0M323.6 409.0a0.7 0.7 0 1 0 1.4 0a0.7 0.7 0 1 0 -1.4 0M322.5 415.1a0.7 0.7 0 1 0 1.4 0a0.7 0.7 0 1 0 -1.4 0M321.0 421.1a0.7 0.7 0 1 0 1.4 0a0.7 0.7 0 1 0 -1.4 0M319.3 427.1a0.7 0.7 0 1 0 1.4 0a0.7 0.7 0 1 0 -1.4 0M317.3 432.9a0.7 0.7 0 1 0 1.4 0a0.7 0.7 0 1 0 -1.4 0M314.9 438.6a0.7 0.7 0 1 0 1.4 0a0.7 0.7 0 1 0 -1.4 0M312.3 444.2a0.7 0.7 0 1 0 1.4 0a0.7 0.7 0 1 0 -1.4 0M309.4 449.7a0.7 0.7 0 1 0 1.4 0a0.7 0.7 0 1 0 -1.4 0M306.2 455.0a0.7 0.7 0 1 0 1.4 0a0.7 0.7 0 1 0 -1.4 0M302.8 460.1a0.7 0.7 0 1 0 1.4 0a0.7 0.7 0 1 0 -1.4 0M299.1 465.1a0.7 0.7 0 1 0 1.4 0a0.7 0.7 0 1 0 -1.4 0M295.1 469.9a0.7 0.7 0 1 0 1.4 0a0.7 0.7 0 1 0 -1.4 0M290.9 474.4a0.7 0.7 0 1 0 1.4 0a0.7 0.7 0 1 0 -1.4 0M286.4 478.7a0.7 0.7 0 1 0 1.4 0a0.7 0.7 0 1 0 -1.4 0M281.8 482.8a0.7 0.7 0 1 0 1.4 0a0.7 0.7 0 1 0 -1.4 0M276.9 486.6a0.7 0.7 0 1 0 1.4 0a0.7 0.7 0 1 0 -1.4 0M271.9 490.2a0.7 0.7 0 1 0 1.4 0a0.7 0.7 0 1 0 -1.4 0M266.7 493.5a0.7 0.7 0 1 0 1.4 0a0.7 0.7 0 1 0 -1.4 0M261.3 496.6a0.7 0.7 0 1 0 1.4 0a0.7 0.7 0 1 0 -1.4 0M255.8 499.4a0.7 0.7 0 1 0 1.4 0a0.7 0.7 0 1 0 -1.4 0M250.1 501.8a0.7 0.7 0 1 0 1.4 0a0.7 0.7 0 1 0 -1.4 0M244.3 504.0a0.7 0.7 0 1 0 1.4 0a0.7 0.7 0 1 0 -1.4 0M238.4 505.9a0.7 0.7 0 1 0 1.4 0a0.7 0.7 0 1 0 -1.4 0M232.4 507.5a0.7 0.7 0 1 0 1.4 0a0.7 0.7 0 1 0 -1.4 0M226.3 508.8a0.7 0.7 0 1 0 1.4 0a0.7 0.7 0 1 0 -1.4 0M220.2 509.7a0.7 0.7 0 1 0 1.4 0a0.7 0.7 0 1 0 -1.4 0M214.1 510.3a0.7 0.7 0 1 0 1.4 0a0.7 0.7 0 1 0 -1.4 0M207.9 510.7a0.7 0.7 0 1 0 1.4 0a0.7 0.7 0 1 0 -1.4 0M201.7 510.7a0.7 0.7 0 1 0 1.4 0a0.7 0.7 0 1 0 -1.4 0M195.5 510.3a0.7 0.7 0 1 0 1.4 0a0.7 0.7 0 1 0 -1.4 0M189.4 509.7a0.7 0.7 0 1 0 1.4 0a0.7 0.7 0 1 0 -1.4 0M183.3 508.8a0.7 0.7 0 1 0 1.4 0a0.7 0.7 0 1 0 -1.4 0M177.2 507.5a0.7 0.7 0 1 0 1.4 0a0.7 0.7 0 1 0 -1.4 0M171.2 505.9a0.7 0.7 0 1 0 1.4 0a0.7 0.7 0 1 0 -1.4 0M165.3 504.0a0.7 0.7 0 1 0 1.4 0a0.7 0.7 0 1 0 -1.4 0M159.5 501.8a0.7 0.7 0 1 0 1.4 0a0.7 0.7 0 1 0 -1.4 0M153.8 499.4a0.7 0.7 0 1 0 1.4 0a0.7 0.7 0 1 0 -1.4 0M148.3 496.6a0.7 0.7 0 1 0 1.4 0a0.7 0.7 0 1 0 -1.4 0M142.9 493.5a0.7 0.7 0 1 0 1.4 0a0.7 0.7 0 1 0 -1.4 0M137.7 490.2a0.7 0.7 0 1 0 1.4 0a0.7 0.7 0 1 0 -1.4 0M132.7 486.6a0.7 0.7 0 1 0 1.4 0a0.7 0.7 0 1 0 -1.4 0M127.8 482.8a0.7 0.7 0 1 0 1.4 0a0.7 0.7 0 1 0 -1.4 0M123.2 478.7a0.7 0.7 0 1 0 1.4 0a0.7 0.7 0 1 0 -1.4 0M118.7 474.4a0.7 0.7 0 1 0 1.4 0a0.7 0.7 0 1 0 -1.4 0M114.5 469.9a0.7 0.7 0 1 0 1.4 0a0.7 0.7 0 1 0 -1.4 0M110.5 465.1a0.7 0.7 0 1 0 1.4 0a0.7 0.7 0 1 0 -1.4 0M106.8 460.1a0.7 0.7 0 1 0 1.4 0a0.7 0.7 0 1 0 -1.4 0M103.4 455.0a0.7 0.7 0 1 0 1.4 0a0.7 0.7 0 1 0 -1.4 0M100.2 449.7a0.7 0.7 0 1 0 1.4 0a0.7 0.7 0 1 0 -1.4 0M97.3 444.2a0.7 0.7 0 1 0 1.4 0a0.7 0.7 0 1 0 -1.4 0M94.7 438.6a0.7 0.7 0 1 0 1.4 0a0.7 0.7 0 1 0 -1.4 0M92.3 432.9a0.7 0.7 0 1 0 1.4 0a0.7 0.7 0 1 0 -1.4 0M90.3 427.1a0.7 0.7 0 1 0 1.4 0a0.7 0.7 0 1 0 -1.4 0M88.6 421.1a0.7 0.7 0 1 0 1.4 0a0.7 0.7 0 1 0 -1.4 0M87.1 415.1a0.7 0.7 0 1 0 1.4 0a0.7 0.7 0 1 0 -1.4 0M86.0 409.0a0.7 0.7 0 1 0 1.4 0a0.7 0.7 0 1 0 -1.4 0M85.2 402.9a0.7 0.7 0 1 0 1.4 0a0.7 0.7 0 1 0 -1.4 0M84.8 396.7a0.7 0.7 0 1 0 1.4 0a0.7 0.7 0 1 0 -1.4 0M84.6 390.5a0.7 0.7 0 1 0 1.4 0a0.7 0.7 0 1 0 -1.4 0M84.8 384.3a0.7 0.7 0 1 0 1.4 0a0.7 0.7 0 1 0 -1.4 0M85.2 378.1a0.7 0.7 0 1 0 1.4 0a0.7 0.7 0 1 0 -1.4 0M86.0 372.0a0.7 0.7 0 1 0 1.4 0a0.7 0.7 0 1 0 -1.4 0M87.1 365.9a0.7 0.7 0 1 0 1.4 0a0.7 0.7 0 1 0 -1.4 0M88.6 359.9a0.7 0.7 0 1 0 1.4 0a0.7 0.7 0 1 0 -1.4 0M90.3 353.9a0.7 0.7 0 1 0 1.4 0a0.7 0.7 0 1 0 -1.4 0M92.3 348.1a0.7 0.7 0 1 0 1.4 0a0.7 0.7 0 1 0 -1.4 0M94.7 342.4a0.7 0.7 0 1 0 1.4 0a0.7 0.7 0 1 0 -1.4 0M97.3 336.8a0.7 0.7 0 1 0 1.4 0a0.7 0.7 0 1 0 -1.4 0M100.2 331.3a0.7 0.7 0 1 0 1.4 0a0.7 0.7 0 1 0 -1.4 0M103.4 326.0a0.7 0.7 0 1 0 1.4 0a0.7 0.7 0 1 0 -1.4 0M106.8 320.9a0.7 0.7 0 1 0 1.4 0a0.7 0.7 0 1 0 -1.4 0M110.5 315.9a0.7 0.7 0 1 0 1.4 0a0.7 0.7 0 1 0 -1.4 0M114.5 311.1a0.7 0.7 0 1 0 1.4 0a0.7 0.7 0 1 0 -1.4 0M118.7 306.6a0.7 0.7 0 1 0 1.4 0a0.7 0.7 0 1 0 -1.4 0M123.2 302.3a0.7 0.7 0 1 0 1.4 0a0.7 0.7 0 1 0 -1.4 0M127.8 298.2a0.7 0.7 0 1 0 1.4 0a0.7 0.7 0 1 0 -1.4 0M132.7 294.4a0.7 0.7 0 1 0 1.4 0a0.7 0.7 0 1 0 -1.4 0M137.7 290.8a0.7 0.7 0 1 0 1.4 0a0.7 0.7 0 1 0 -1.4 0M142.9 287.5a0.7 0.7 0 1 0 1.4 0a0.7 0.7 0 1 0 -1.4 0M148.3 284.4a0.7 0.7 0 1 0 1.4 0a0.7 0.7 0 1 0 -1.4 0M153.8 281.6a0.7 0.7 0 1 0 1.4 0a0.7 0.7 0 1 0 -1.4 0M159.5 279.2a0.7 0.7 0 1 0 1.4 0a0.7 0.7 0 1 0 -1.4 0M165.3 277.0a0.7 0.7 0 1 0 1.4 0a0.7 0.7 0 1 0 -1.4 0M171.2 275.1a0.7 0.7 0 1 0 1.4 0a0.7 0.7 0 1 0 -1.4 0M177.2 273.5a0.7 0.7 0 1 0 1.4 0a0.7 0.7 0 1 0 -1.4 0M183.3 272.2a0.7 0.7 0 1 0 1.4 0a0.7 0.7 0 1 0 -1.4 0M189.4 271.3a0.7 0.7 0 1 0 1.4 0a0.7 0.7 0 1 0 -1.4 0M195.5 270.7a0.7 0.7 0 1 0 1.4 0a0.7 0.7 0 1 0 -1.4 0M201.7 270.3a0.7 0.7 0 1 0 1.4 0a0.7 0.7 0 1 0 -1.4 0M207.9 270.3a0.7 0.7 0 1 0 1.4 0a0.7 0.7 0 1 0 -1.4 0M214.1 270.7a0.7 0.7 0 1 0 1.4 0a0.7 0.7 0 1 0 -1.4 0M220.2 271.3a0.7 0.7 0 1 0 1.4 0a0.7 0.7 0 1 0 -1.4 0M226.3 272.2a0.7 0.7 0 1 0 1.4 0a0.7 0.7 0 1 0 -1.4 0M232.4 273.5a0.7 0.7 0 1 0 1.4 0a0.7 0.7 0 1 0 -1.4 0M238.4 275.1a0.7 0.7 0 1 0 1.4 0a0.7 0.7 0 1 0 -1.4 0M244.3 277.0a0.7 0.7 0 1 0 1.4 0a0.7 0.7 0 1 0 -1.4 0M250.1 279.2a0.7 0.7 0 1 0 1.4 0a0.7 0.7 0 1 0 -1.4 0M255.8 281.6a0.7 0.7 0 1 0 1.4 0a0.7 0.7 0 1 0 -1.4 0M261.3 284.4a0.7 0.7 0 1 0 1.4 0a0.7 0.7 0 1 0 -1.4 0M266.7 287.5a0.7 0.7 0 1 0 1.4 0a0.7 0.7 0 1 0 -1.4 0M271.9 290.8a0.7 0.7 0 1 0 1.4 0a0.7 0.7 0 1 0 -1.4 0M276.9 294.4a0.7 0.7 0 1 0 1.4 0a0.7 0.7 0 1 0 -1.4 0M281.8 298.2a0.7 0.7 0 1 0 1.4 0a0.7 0.7 0 1 0 -1.4 0M286.4 302.3a0.7 0.7 0 1 0 1.4 0a0.7 0.7 0 1 0 -1.4 0M290.9 306.6a0.7 0.7 0 1 0 1.4 0a0.7 0.7 0 1 0 -1.4 0M295.1 311.1a0.7 0.7 0 1 0 1.4 0a0.7 0.7 0 1 0 -1.4 0M317.3 348.1a0.7 0.7 0 1 0 1.4 0a0.7 0.7 0 1 0 -1.4 0M319.3 353.9a0.7 0.7 0 1 0 1.4 0a0.7 0.7 0 1 0 -1.4 0M321.0 359.9a0.7 0.7 0 1 0 1.4 0a0.7 0.7 0 1 0 -1.4 0M322.5 365.9a0.7 0.7 0 1 0 1.4 0a0.7 0.7 0 1 0 -1.4 0M323.6 372.0a0.7 0.7 0 1 0 1.4 0a0.7 0.7 0 1 0 -1.4 0M324.4 378.1a0.7 0.7 0 1 0 1.4 0a0.7 0.7 0 1 0 -1.4 0M324.8 384.3a0.7 0.7 0 1 0 1.4 0a0.7 0.7 0 1 0 -1.4 0"/><circle cx="205.5" cy="390.5" r="108" fill="none" stroke="#0a0a0a" stroke-width="0.8"/><text x="0" y="0" font-family="Liberation Sans" font-weight="bold" font-size="15" fill="#f0f0d6" letter-spacing="0.4" transform="translate(167.8 288.8) scale(1.22 1)">GARMIN</text><text x="0" y="0" font-family="Liberation Sans" font-weight="bold" font-size="15.3" fill="#fff" transform="translate(182 346.1) scale(0.88 1)">18:29 3</text><text x="0" y="0" font-family="Liberation Sans" font-weight="bold" font-size="15.3" fill="#fff" transform="translate(130.5 361.1) scale(0.88 1)">18:29 1</text><text x="0" y="0" font-family="Liberation Sans" font-weight="bold" font-size="15.3" fill="#fff" transform="translate(235.5 361.1) scale(0.88 1)">18:29 5</text><text x="0" y="0" font-family="Liberation Sans" font-weight="bold" font-size="15.3" fill="#fff" transform="translate(130.5 421.1) scale(0.88 1)">18:29 2</text><text x="0" y="0" font-family="Liberation Sans" font-weight="bold" font-size="15.3" fill="#fff" transform="translate(235.5 421.1) scale(0.88 1)">18:29 6</text><text x="0" y="0" font-family="Liberation Sans" font-weight="bold" font-size="15.3" fill="#fff" transform="translate(182 436.1) scale(0.88 1)">18:29 4</text><circle cx="99" cy="328" r="3.4" fill="none" stroke="#c4c4c4" stroke-width="1.6"/><path d="M104.6 328.0 L107.6 328.0" stroke="#c4c4c4" stroke-width="1.4"/><path d="M103.0 332.0 L105.1 334.1" stroke="#c4c4c4" stroke-width="1.4"/><path d="M99.0 333.6 L99.0 336.6" stroke="#c4c4c4" stroke-width="1.4"/><path d="M95.0 332.0 L92.9 334.1" stroke="#c4c4c4" stroke-width="1.4"/><path d="M93.4 328.0 L90.4 328.0" stroke="#c4c4c4" stroke-width="1.4"/><path d="M95.0 324.0 L92.9 321.9" stroke="#c4c4c4" stroke-width="1.4"/><path d="M99.0 322.4 L99.0 319.4" stroke="#c4c4c4" stroke-width="1.4"/><path d="M103.0 324.0 L105.1 321.9" stroke="#c4c4c4" stroke-width="1.4"/><path d="M78.5 415.5 l4-4.6 l4.6 3.8" stroke="#c4c4c4" stroke-width="1.9" fill="none"/><path d="M92.5 450 l4.6 4.4 l3.6-5" stroke="#b8b8b8" stroke-width="1.9" fill="none"/><path d="M309 449.5 q7-2.5 8 3 q0.5 5-6.5 5.5" stroke="#c0c0c0" stroke-width="1.9" fill="none"/><path d="M306.5 449.5 l4.5-4 v7.5z" fill="#c0c0c0"/><g stroke="#8a8a8a" stroke-width="2" fill="none" stroke-linecap="round" stroke-linejoin="round"><path d="M318 323 l-3.5 7 l-3.5 5.5"/><path d="M314.5 330 l4.5 1.5 l-2 5"/><path d="M318 323 l3 2.5 l3.5-3"/><path d="M318 323 l-4.5 0.5 l-2 3"/></g><circle cx="320.5" cy="319" r="2" fill="#8a8a8a"/></svg>
<div class="a" style="left:957px;top:120px;width:436px;height:543px;box-shadow:0 2px 16px 4px rgba(0,0,0,0.25)"></div><div class="a" style="left:957px;top:120px;width:436px;height:543px;background:#f0f0f0;border:1px solid #1883d7"></div><div class="a" style="left:958px;top:121px;width:434px;height:93px;background:#fff"></div><div class="a" style="left:958px;top:214px;width:434px;height:1px;background:#a0a0a0"></div><svg style="left:1250px;top:150px" width="142" height="22" viewBox="0 0 142 22"><defs><linearGradient id="bg1" x1="0" x2="1"><stop offset="0" stop-color="#fff"/><stop offset="1" stop-color="#cfd8f0"/></linearGradient></defs><path d="M2 21 Q40 6 142 1 V21z" fill="url(#bg1)"/></svg><svg style="left:968px;top:129px" width="14" height="14" viewBox="0 0 14 14"><circle cx="7" cy="7" r="6.5" fill="#f7941e"/><circle cx="7.8" cy="7" r="6.2" fill="#2c2255"/><path d="M2 5.3h11.5M1.8 7h12M2 8.7h11.5" stroke="#fff" stroke-width="0.9"/></svg><div class="t" style="left:987px;top:130px;font-size:12px;color:#000;">App Settings Editor</div><svg style="left:1370px;top:129px" width="12" height="12" viewBox="0 0 12 12"><path d="M1 1l10 10M11 1l-10 10" stroke="#000" stroke-width="1.1"/></svg><div class="t" style="left:964px;top:162px;font-size:13px;color:#000;font-weight:bold">App Settings Editor</div><div class="t" style="left:972px;top:186px;font-size:12px;color:#000;">Settings sent successfully.</div><div class="t" style="left:968px;top:228px;font-size:12px;color:#000;">Project</div><div class="t" style="left:1133px;top:228px;font-size:12px;color:#000;">Rebuild</div><div class="t" style="left:1220px;top:228px;font-size:12px;color:#000;">Language</div><div class="a" style="left:968px;top:256px;width:160px;height:23px;background:#fff;border:1px solid #7a7a7a"></div><div class="t" style="left:974px;top:261px;font-size:12px;color:#000;">SimpleWatchFace</div><svg style="left:1114px;top:265px" width="10" height="6" viewBox="0 0 10 6"><path d="M0.5 0.5 l4 4 l4-4" stroke="#444" stroke-width="1.1" fill="none"/></svg><div class="a" style="left:1133px;top:262px;width:13px;height:13px;background:#fff;border:1px solid #333"></div><div class="a" style="left:1220px;top:256px;width:162px;height:23px;background:#fff;border:1px solid #7a7a7a"></div><div class="t" style="left:1226px;top:261px;font-size:12px;color:#000;">Default</div><svg style="left:1368px;top:265px" width="10" height="6" viewBox="0 0 10 6"><path d="M0.5 0.5 l4 4 l4-4" stroke="#444" stroke-width="1.1" fill="none"/></svg><div class="a" style="left:973px;top:301px;width:405px;height:244px;border:1px solid #a8a8a8;background:#f0f0f0"></div><div class="a" style="left:974px;top:302px;width:403px;height:1px;background:#fff"></div><div class="a" style="left:1358px;top:302px;width:1px;height:242px;background:#fff"></div><div class="a" style="left:1359px;top:403px;width:15px;height:123px;background:#cdcdcd"></div><svg style="left:1362px;top:309px" width="9" height="6" viewBox="0 0 9 6"><path d="M1 5l3.5-3.5l3.5 3.5" stroke="#555" stroke-width="1.6" fill="none"/></svg><svg style="left:1362px;top:532px" width="9" height="6" viewBox="0 0 9 6"><path d="M1 1l3.5 3.5l3.5-3.5" stroke="#555" stroke-width="1.6" fill="none"/></svg><div class="t" style="left:985px;top:318px;font-size:12px;color:#000;">Set Matrix X</div><div class="a" style="left:985px;top:336px;width:227px;height:23px;background:#fff;border:1px solid #7a7a7a"></div><div class="t" style="left:991px;top:341px;font-size:12px;color:#000;">3</div><svg style="left:1198px;top:345px" width="10" height="6" viewBox="0 0 10 6"><path d="M0.5 0.5 l4 4 l4-4" stroke="#444" stroke-width="1.1" fill="none"/></svg><div class="t" style="left:985px;top:376px;font-size:12px;color:#000;">Set Matrix Y</div><div class="a" style="left:985px;top:394px;width:227px;height:23px;background:#fff;border:1px solid #7a7a7a"></div><div class="t" style="left:991px;top:399px;font-size:12px;color:#000;">2</div><svg style="left:1198px;top:403px" width="10" height="6" viewBox="0 0 10 6"><path d="M0.5 0.5 l4 4 l4-4" stroke="#444" stroke-width="1.1" fill="none"/></svg><div class="t" style="left:985px;top:434px;font-size:12px;color:#000;">Time position</div><div class="a" style="left:985px;top:452px;width:227px;height:24px;background:#fff;border:1px solid #0078d7;border-bottom:2px solid #0078d7"></div><div class="a" style="left:991px;top:455px;width:35px;height:15px;background:#0078d7"></div><div class="t" style="left:991px;top:458px;font-size:12px;color:#fff;">Empty</div><div class="a" style="left:1195px;top:452px;width:17px;height:23px;background:#cce4f7;border:1px solid #005499"></div><svg style="left:1198px;top:462px" width="10" height="6" viewBox="0 0 10 6"><path d="M0.5 0.5 l4 4 l4-4" stroke="#444" stroke-width="1.1" fill="none"/></svg><div class="a" style="left:958px;top:609px;width:434px;height:1px;background:#a0a0a0"></div><svg style="left:973px;top:624px" width="22" height="22" viewBox="0 0 22 22"><circle cx="11" cy="11" r="9.5" fill="#f4f4f8" stroke="#5a6a8a" stroke-width="1.3"/><text x="11" y="16.5" text-anchor="middle" font-size="15" font-weight="bold" fill="#5a6a8a" font-family="Liberation Sans">?</text></svg><div class="a" style="left:1192px;top:625px;width:90px;height:23px;background:#e1e1e1;border:2px solid #0078d7"></div><div class="t" style="left:1201px;top:631px;font-size:12px;color:#000;letter-spacing:-0.25px">Send Settings</div><div class="a" style="left:1290px;top:625px;width:91px;height:23px;background:#e1e1e1;border:1px solid #adadad"></div><div class="t" style="left:1320px;top:631px;font-size:12px;color:#000;">Close</div><div class="a" style="left:985px;top:476px;width:227px;height:151px;background:#fff;border:1px solid #0078d7;border-top:none;box-shadow:3px 3px 4px rgba(0,0,0,0.35)"></div><div class="a" style="left:986px;top:506px;width:225px;height:15px;background:#0078d7"></div><div class="t" style="left:988px;top:478px;font-size:12px;color:#000;">Empty</div><div class="t" style="left:988px;top:493px;font-size:12px;color:#000;">Top Left</div><div class="t" style="left:988px;top:508px;font-size:12px;color:#fff;">Top Center</div><div class="t" style="left:988px;top:523px;font-size:12px;color:#000;">Top Right</div><div class="t" style="left:988px;top:538px;font-size:12px;color:#000;">Center Left</div><div class="t" style="left:988px;top:553px;font-size:12px;color:#000;">Center</div><div class="t" style="left:988px;top:568px;font-size:12px;color:#000;">Center Right</div><div class="t" style="left:988px;top:583px;font-size:12px;color:#000;">Bottom Left</div><div class="t" style="left:988px;top:598px;font-size:12px;color:#000;">Bottom Center</div><div class="t" style="left:988px;top:613px;font-size:12px;color:#000;">Bottom Right</div>
</body></html>
